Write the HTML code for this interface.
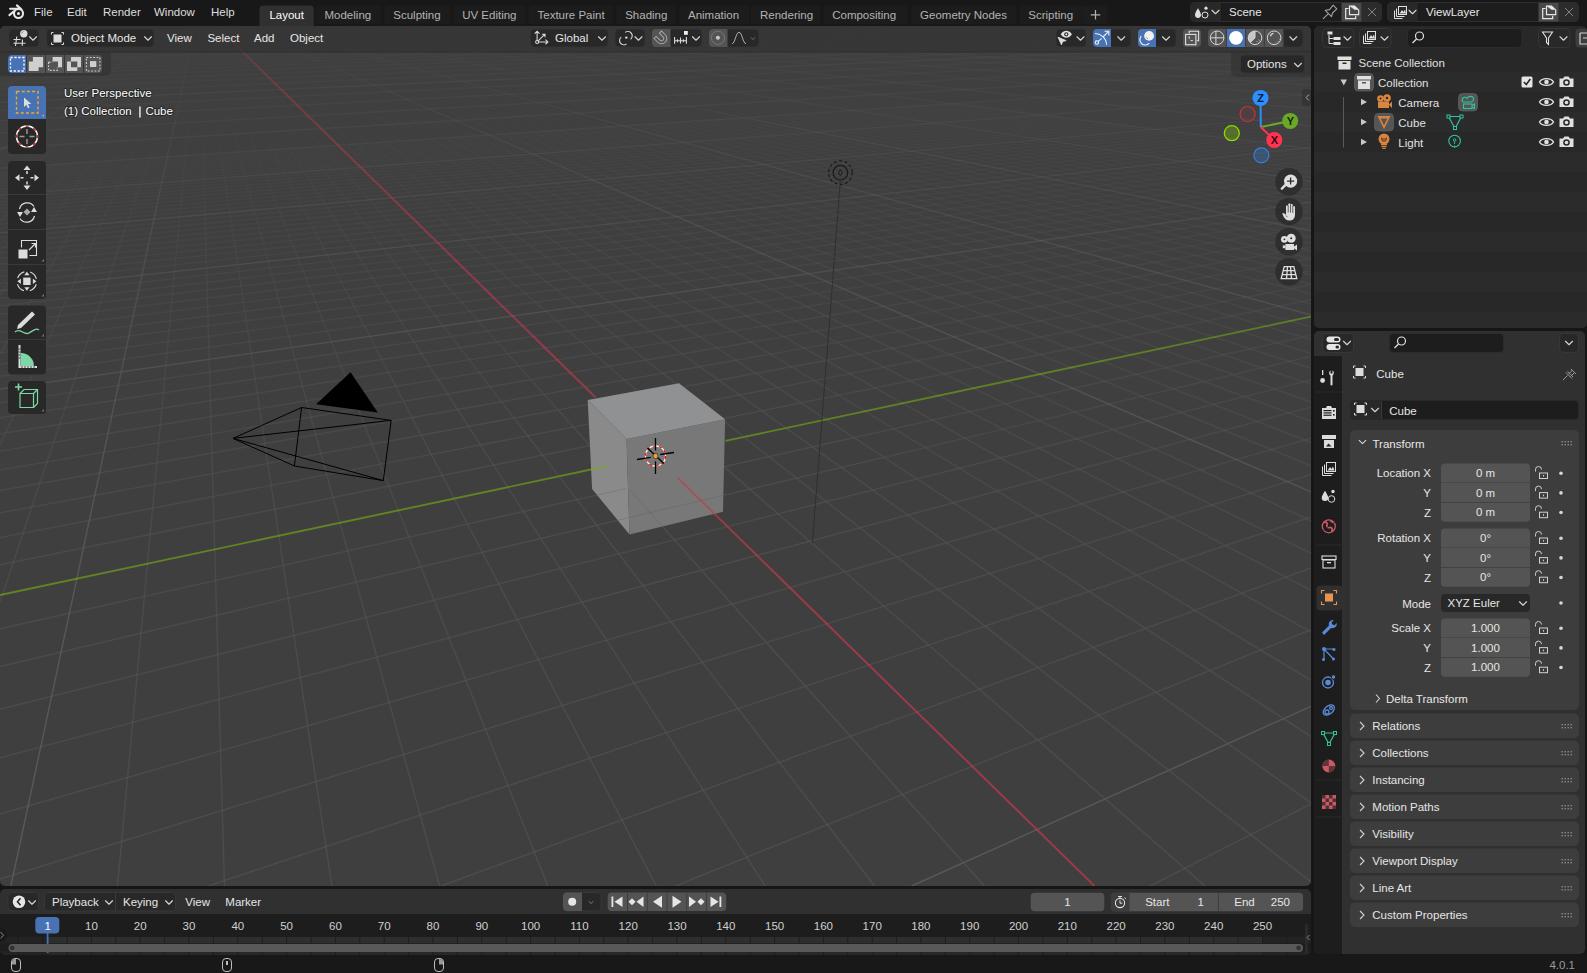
<!DOCTYPE html>
<html><head><meta charset="utf-8"><title>Blender</title>
<style>html,body{margin:0;padding:0;background:#161616;overflow:hidden}svg{display:block}text{font-family:"Liberation Sans",sans-serif}</style>
</head><body><svg width="1587" height="973" viewBox="0 0 1587 973" font-family='"Liberation Sans", sans-serif'><defs><style>stop{stop-color:#545454}</style><clipPath id="vpclip"><rect x="0" y="26" width="1311" height="860" rx="5"/></clipPath><linearGradient id="g1" gradientUnits="userSpaceOnUse" x1="0.0" y1="26.8" x2="41.1" y2="26.0"><stop offset="0.00" style="stop-color:#595959" stop-opacity="0.02"/><stop offset="1.00" style="stop-color:#595959" stop-opacity="0.02"/></linearGradient><linearGradient id="g2" gradientUnits="userSpaceOnUse" x1="0.0" y1="29.2" x2="155.9" y2="26.0"><stop offset="0.00" style="stop-color:#5c5c5c" stop-opacity="0.03"/><stop offset="1.00" style="stop-color:#5c5c5c" stop-opacity="0.03"/></linearGradient><linearGradient id="g3" gradientUnits="userSpaceOnUse" x1="0.0" y1="32.6" x2="300.8" y2="26.0"><stop offset="0.00" style="stop-color:#5e5e5e" stop-opacity="0.04"/><stop offset="1.00" style="stop-color:#5e5e5e" stop-opacity="0.04"/></linearGradient><linearGradient id="g4" gradientUnits="userSpaceOnUse" x1="0.0" y1="33.0" x2="317.4" y2="26.0"><stop offset="0.00" stop-opacity="0.01"/><stop offset="1.00" stop-opacity="0.01"/></linearGradient><linearGradient id="g5" gradientUnits="userSpaceOnUse" x1="0.0" y1="33.4" x2="334.5" y2="26.0"><stop offset="0.00" stop-opacity="0.01"/><stop offset="1.00" stop-opacity="0.01"/></linearGradient><linearGradient id="g6" gradientUnits="userSpaceOnUse" x1="0.0" y1="33.8" x2="352.0" y2="26.0"><stop offset="0.00" stop-opacity="0.01"/><stop offset="1.00" stop-opacity="0.01"/></linearGradient><linearGradient id="g7" gradientUnits="userSpaceOnUse" x1="0.0" y1="34.3" x2="370.0" y2="26.0"><stop offset="0.00" stop-opacity="0.01"/><stop offset="1.00" stop-opacity="0.01"/></linearGradient><linearGradient id="g8" gradientUnits="userSpaceOnUse" x1="0.0" y1="34.8" x2="388.5" y2="26.0"><stop offset="0.00" stop-opacity="0.01"/><stop offset="1.00" stop-opacity="0.01"/></linearGradient><linearGradient id="g9" gradientUnits="userSpaceOnUse" x1="0.0" y1="35.2" x2="407.6" y2="26.0"><stop offset="0.00" stop-opacity="0.01"/><stop offset="1.00" stop-opacity="0.01"/></linearGradient><linearGradient id="g10" gradientUnits="userSpaceOnUse" x1="0.0" y1="35.8" x2="427.2" y2="26.0"><stop offset="0.00" stop-opacity="0.01"/><stop offset="1.00" stop-opacity="0.01"/></linearGradient><linearGradient id="g11" gradientUnits="userSpaceOnUse" x1="0.0" y1="36.3" x2="447.3" y2="26.0"><stop offset="0.00" stop-opacity="0.01"/><stop offset="1.00" stop-opacity="0.01"/></linearGradient><linearGradient id="g12" gradientUnits="userSpaceOnUse" x1="0.0" y1="36.9" x2="468.1" y2="26.0"><stop offset="0.00" stop-opacity="0.01"/><stop offset="1.00" stop-opacity="0.01"/></linearGradient><linearGradient id="g13" gradientUnits="userSpaceOnUse" x1="0.0" y1="37.5" x2="489.5" y2="26.0"><stop offset="0.00" style="stop-color:#616161" stop-opacity="0.05"/><stop offset="1.00" style="stop-color:#616161" stop-opacity="0.05"/></linearGradient><linearGradient id="g14" gradientUnits="userSpaceOnUse" x1="0.0" y1="38.1" x2="511.5" y2="26.0"><stop offset="0.00" stop-opacity="0.02"/><stop offset="1.00" stop-opacity="0.01"/></linearGradient><linearGradient id="g15" gradientUnits="userSpaceOnUse" x1="0.0" y1="38.8" x2="534.2" y2="26.0"><stop offset="0.00" stop-opacity="0.02"/><stop offset="1.00" stop-opacity="0.02"/></linearGradient><linearGradient id="g16" gradientUnits="userSpaceOnUse" x1="0.0" y1="39.4" x2="557.7" y2="26.0"><stop offset="0.00" stop-opacity="0.02"/><stop offset="1.00" stop-opacity="0.02"/></linearGradient><linearGradient id="g17" gradientUnits="userSpaceOnUse" x1="0.0" y1="40.2" x2="581.9" y2="26.0"><stop offset="0.00" stop-opacity="0.02"/><stop offset="1.00" stop-opacity="0.02"/></linearGradient><linearGradient id="g18" gradientUnits="userSpaceOnUse" x1="0.0" y1="40.9" x2="606.8" y2="26.0"><stop offset="0.00" stop-opacity="0.02"/><stop offset="1.00" stop-opacity="0.02"/></linearGradient><linearGradient id="g19" gradientUnits="userSpaceOnUse" x1="0.0" y1="41.7" x2="632.7" y2="26.0"><stop offset="0.00" stop-opacity="0.03"/><stop offset="1.00" stop-opacity="0.02"/></linearGradient><linearGradient id="g20" gradientUnits="userSpaceOnUse" x1="0.0" y1="42.6" x2="659.3" y2="26.0"><stop offset="0.00" stop-opacity="0.03"/><stop offset="1.00" stop-opacity="0.02"/></linearGradient><linearGradient id="g21" gradientUnits="userSpaceOnUse" x1="0.0" y1="43.5" x2="687.0" y2="26.0"><stop offset="0.00" stop-opacity="0.03"/><stop offset="1.00" stop-opacity="0.02"/></linearGradient><linearGradient id="g22" gradientUnits="userSpaceOnUse" x1="0.0" y1="44.5" x2="715.5" y2="26.0"><stop offset="0.00" stop-opacity="0.04"/><stop offset="1.00" stop-opacity="0.03"/></linearGradient><linearGradient id="g23" gradientUnits="userSpaceOnUse" x1="0.0" y1="45.5" x2="745.1" y2="26.0"><stop offset="0.00" style="stop-color:#646464" stop-opacity="0.07"/><stop offset="1.00" style="stop-color:#646464" stop-opacity="0.06"/></linearGradient><linearGradient id="g24" gradientUnits="userSpaceOnUse" x1="0.0" y1="46.6" x2="775.7" y2="26.0"><stop offset="0.00" stop-opacity="0.05"/><stop offset="1.00" stop-opacity="0.03"/></linearGradient><linearGradient id="g25" gradientUnits="userSpaceOnUse" x1="0.0" y1="47.7" x2="807.5" y2="26.0"><stop offset="0.00" stop-opacity="0.05"/><stop offset="1.00" stop-opacity="0.03"/></linearGradient><linearGradient id="g26" gradientUnits="userSpaceOnUse" x1="0.0" y1="49.0" x2="840.5" y2="26.0"><stop offset="0.00" stop-opacity="0.06"/><stop offset="1.00" stop-opacity="0.04"/></linearGradient><linearGradient id="g27" gradientUnits="userSpaceOnUse" x1="0.0" y1="50.3" x2="874.7" y2="26.0"><stop offset="0.00" stop-opacity="0.07"/><stop offset="1.00" stop-opacity="0.04"/></linearGradient><linearGradient id="g28" gradientUnits="userSpaceOnUse" x1="0.0" y1="51.7" x2="910.3" y2="26.0"><stop offset="0.00" stop-opacity="0.08"/><stop offset="1.00" stop-opacity="0.04"/></linearGradient><linearGradient id="g29" gradientUnits="userSpaceOnUse" x1="0.0" y1="53.3" x2="947.3" y2="26.0"><stop offset="0.00" stop-opacity="0.08"/><stop offset="1.00" stop-opacity="0.05"/></linearGradient><linearGradient id="g30" gradientUnits="userSpaceOnUse" x1="0.0" y1="54.9" x2="985.8" y2="26.0"><stop offset="0.00" stop-opacity="0.09"/><stop offset="0.43" stop-opacity="0.08"/><stop offset="1.00" stop-opacity="0.05"/></linearGradient><linearGradient id="g31" gradientUnits="userSpaceOnUse" x1="0.0" y1="56.8" x2="1025.8" y2="26.0"><stop offset="0.00" stop-opacity="0.09"/><stop offset="0.57" stop-opacity="0.08"/><stop offset="1.00" stop-opacity="0.05"/></linearGradient><linearGradient id="g32" gradientUnits="userSpaceOnUse" x1="0.0" y1="58.7" x2="1067.6" y2="26.0"><stop offset="0.00" stop-opacity="0.09"/><stop offset="0.57" stop-opacity="0.09"/><stop offset="1.00" stop-opacity="0.06"/></linearGradient><linearGradient id="g33" gradientUnits="userSpaceOnUse" x1="0.0" y1="60.9" x2="1111.2" y2="26.0"><stop offset="0.00" style="stop-color:#666666" stop-opacity="0.10"/><stop offset="1.00" style="stop-color:#666666" stop-opacity="0.07"/></linearGradient><linearGradient id="g34" gradientUnits="userSpaceOnUse" x1="0.0" y1="63.2" x2="1156.7" y2="26.0"><stop offset="0.00" stop-opacity="0.10"/><stop offset="0.50" stop-opacity="0.10"/><stop offset="1.00" stop-opacity="0.07"/></linearGradient><linearGradient id="g35" gradientUnits="userSpaceOnUse" x1="0.0" y1="65.8" x2="1204.3" y2="26.0"><stop offset="0.00" stop-opacity="0.11"/><stop offset="0.50" stop-opacity="0.10"/><stop offset="1.00" stop-opacity="0.07"/></linearGradient><linearGradient id="g36" gradientUnits="userSpaceOnUse" x1="0.0" y1="68.6" x2="1254.0" y2="26.0"><stop offset="0.00" stop-opacity="0.11"/><stop offset="0.43" stop-opacity="0.11"/><stop offset="1.00" stop-opacity="0.07"/></linearGradient><linearGradient id="g37" gradientUnits="userSpaceOnUse" x1="0.0" y1="71.8" x2="1306.1" y2="26.0"><stop offset="0.00" style="stop-color:#555555" stop-opacity="0.12"/><stop offset="0.43" stop-opacity="0.11"/><stop offset="1.00" stop-opacity="0.07"/></linearGradient><linearGradient id="g38" gradientUnits="userSpaceOnUse" x1="0.0" y1="75.4" x2="1311.0" y2="27.8"><stop offset="0.00" style="stop-color:#555555" stop-opacity="0.12"/><stop offset="0.43" stop-opacity="0.12"/><stop offset="1.00" stop-opacity="0.07"/></linearGradient><linearGradient id="g39" gradientUnits="userSpaceOnUse" x1="0.0" y1="79.4" x2="1311.0" y2="30.0"><stop offset="0.00" style="stop-color:#555555" stop-opacity="0.13"/><stop offset="0.43" style="stop-color:#555555" stop-opacity="0.13"/><stop offset="1.00" stop-opacity="0.08"/></linearGradient><linearGradient id="g40" gradientUnits="userSpaceOnUse" x1="0.0" y1="83.9" x2="1311.0" y2="32.6"><stop offset="0.00" style="stop-color:#555555" stop-opacity="0.14"/><stop offset="0.43" style="stop-color:#555555" stop-opacity="0.14"/><stop offset="1.00" style="stop-color:#555555" stop-opacity="0.08"/></linearGradient><linearGradient id="g41" gradientUnits="userSpaceOnUse" x1="0.0" y1="89.1" x2="1311.0" y2="35.5"><stop offset="0.00" style="stop-color:#565656" stop-opacity="0.15"/><stop offset="0.43" style="stop-color:#555555" stop-opacity="0.14"/><stop offset="1.00" style="stop-color:#555555" stop-opacity="0.09"/></linearGradient><linearGradient id="g42" gradientUnits="userSpaceOnUse" x1="0.0" y1="95.2" x2="1311.0" y2="38.8"><stop offset="0.00" style="stop-color:#575757" stop-opacity="0.16"/><stop offset="0.43" style="stop-color:#565656" stop-opacity="0.16"/><stop offset="1.00" style="stop-color:#555555" stop-opacity="0.09"/></linearGradient><linearGradient id="g43" gradientUnits="userSpaceOnUse" x1="0.0" y1="102.2" x2="1311.0" y2="42.7"><stop offset="0.00" style="stop-color:#666666" stop-opacity="0.17"/><stop offset="0.43" style="stop-color:#666666" stop-opacity="0.17"/><stop offset="1.00" style="stop-color:#666666" stop-opacity="0.10"/></linearGradient><linearGradient id="g44" gradientUnits="userSpaceOnUse" x1="0.0" y1="110.5" x2="1311.0" y2="47.3"><stop offset="0.00" style="stop-color:#585858" stop-opacity="0.19"/><stop offset="0.43" style="stop-color:#575757" stop-opacity="0.18"/><stop offset="1.00" style="stop-color:#565656" stop-opacity="0.11"/></linearGradient><linearGradient id="g45" gradientUnits="userSpaceOnUse" x1="0.0" y1="120.6" x2="1311.0" y2="52.9"><stop offset="0.00" style="stop-color:#595959" stop-opacity="0.21"/><stop offset="0.43" style="stop-color:#585858" stop-opacity="0.20"/><stop offset="1.00" style="stop-color:#565656" stop-opacity="0.12"/></linearGradient><linearGradient id="g46" gradientUnits="userSpaceOnUse" x1="0.0" y1="132.9" x2="1311.0" y2="59.7"><stop offset="0.00" style="stop-color:#5a5a5a" stop-opacity="0.23"/><stop offset="0.43" style="stop-color:#585858" stop-opacity="0.22"/><stop offset="1.00" style="stop-color:#575757" stop-opacity="0.13"/></linearGradient><linearGradient id="g47" gradientUnits="userSpaceOnUse" x1="0.0" y1="148.3" x2="1311.0" y2="68.3"><stop offset="0.00" style="stop-color:#5b5b5b" stop-opacity="0.25"/><stop offset="0.43" style="stop-color:#595959" stop-opacity="0.24"/><stop offset="1.00" style="stop-color:#585858" stop-opacity="0.15"/></linearGradient><linearGradient id="g48" gradientUnits="userSpaceOnUse" x1="0.0" y1="168.2" x2="1311.0" y2="79.4"><stop offset="0.00" style="stop-color:#5c5c5c" stop-opacity="0.28"/><stop offset="0.43" style="stop-color:#5b5b5b" stop-opacity="0.27"/><stop offset="1.00" style="stop-color:#595959" stop-opacity="0.17"/></linearGradient><linearGradient id="g49" gradientUnits="userSpaceOnUse" x1="0.0" y1="170.6" x2="1311.0" y2="80.7"><stop offset="0.00" stop-opacity="0.13"/><stop offset="0.43" stop-opacity="0.10"/><stop offset="1.00" stop-opacity="0.04"/></linearGradient><linearGradient id="g50" gradientUnits="userSpaceOnUse" x1="0.0" y1="173.0" x2="1311.0" y2="82.0"><stop offset="0.00" stop-opacity="0.13"/><stop offset="0.43" stop-opacity="0.11"/><stop offset="1.00" stop-opacity="0.04"/></linearGradient><linearGradient id="g51" gradientUnits="userSpaceOnUse" x1="0.0" y1="175.4" x2="1311.0" y2="83.4"><stop offset="0.00" stop-opacity="0.13"/><stop offset="0.43" stop-opacity="0.11"/><stop offset="1.00" stop-opacity="0.04"/></linearGradient><linearGradient id="g52" gradientUnits="userSpaceOnUse" x1="0.0" y1="178.0" x2="1311.0" y2="84.8"><stop offset="0.00" stop-opacity="0.14"/><stop offset="0.43" stop-opacity="0.11"/><stop offset="1.00" stop-opacity="0.04"/></linearGradient><linearGradient id="g53" gradientUnits="userSpaceOnUse" x1="0.0" y1="180.6" x2="1311.0" y2="86.3"><stop offset="0.00" stop-opacity="0.14"/><stop offset="0.43" stop-opacity="0.12"/><stop offset="1.00" stop-opacity="0.05"/></linearGradient><linearGradient id="g54" gradientUnits="userSpaceOnUse" x1="0.0" y1="183.3" x2="1311.0" y2="87.8"><stop offset="0.00" stop-opacity="0.14"/><stop offset="0.43" stop-opacity="0.12"/><stop offset="1.00" stop-opacity="0.05"/></linearGradient><linearGradient id="g55" gradientUnits="userSpaceOnUse" x1="0.0" y1="186.1" x2="1311.0" y2="89.3"><stop offset="0.00" stop-opacity="0.15"/><stop offset="0.43" stop-opacity="0.12"/><stop offset="1.00" stop-opacity="0.05"/></linearGradient><linearGradient id="g56" gradientUnits="userSpaceOnUse" x1="0.0" y1="189.0" x2="1311.0" y2="90.9"><stop offset="0.00" stop-opacity="0.15"/><stop offset="0.43" stop-opacity="0.13"/><stop offset="1.00" stop-opacity="0.06"/></linearGradient><linearGradient id="g57" gradientUnits="userSpaceOnUse" x1="0.0" y1="192.0" x2="1311.0" y2="92.6"><stop offset="0.00" stop-opacity="0.16"/><stop offset="0.43" stop-opacity="0.13"/><stop offset="1.00" stop-opacity="0.06"/></linearGradient><linearGradient id="g58" gradientUnits="userSpaceOnUse" x1="0.0" y1="195.0" x2="1311.0" y2="94.3"><stop offset="0.00" style="stop-color:#5d5d5d" stop-opacity="0.32"/><stop offset="0.43" style="stop-color:#5c5c5c" stop-opacity="0.31"/><stop offset="1.00" style="stop-color:#5a5a5a" stop-opacity="0.19"/></linearGradient><linearGradient id="g59" gradientUnits="userSpaceOnUse" x1="0.0" y1="198.2" x2="1311.0" y2="96.1"><stop offset="0.00" stop-opacity="0.17"/><stop offset="0.43" stop-opacity="0.14"/><stop offset="1.00" stop-opacity="0.06"/></linearGradient><linearGradient id="g60" gradientUnits="userSpaceOnUse" x1="0.0" y1="201.6" x2="1311.0" y2="97.9"><stop offset="0.00" stop-opacity="0.17"/><stop offset="0.43" stop-opacity="0.14"/><stop offset="1.00" stop-opacity="0.07"/></linearGradient><linearGradient id="g61" gradientUnits="userSpaceOnUse" x1="0.0" y1="205.0" x2="1311.0" y2="99.8"><stop offset="0.00" stop-opacity="0.18"/><stop offset="0.43" stop-opacity="0.15"/><stop offset="1.00" stop-opacity="0.07"/></linearGradient><linearGradient id="g62" gradientUnits="userSpaceOnUse" x1="0.0" y1="208.5" x2="1311.0" y2="101.8"><stop offset="0.00" stop-opacity="0.18"/><stop offset="0.43" stop-opacity="0.15"/><stop offset="1.00" stop-opacity="0.07"/></linearGradient><linearGradient id="g63" gradientUnits="userSpaceOnUse" x1="0.0" y1="212.2" x2="1311.0" y2="103.8"><stop offset="0.00" stop-opacity="0.19"/><stop offset="0.43" stop-opacity="0.16"/><stop offset="1.00" stop-opacity="0.07"/></linearGradient><linearGradient id="g64" gradientUnits="userSpaceOnUse" x1="0.0" y1="216.1" x2="1311.0" y2="106.0"><stop offset="0.00" stop-opacity="0.19"/><stop offset="0.43" stop-opacity="0.16"/><stop offset="1.00" stop-opacity="0.08"/></linearGradient><linearGradient id="g65" gradientUnits="userSpaceOnUse" x1="0.0" y1="220.0" x2="1311.0" y2="108.2"><stop offset="0.00" stop-opacity="0.20"/><stop offset="0.43" stop-opacity="0.17"/><stop offset="1.00" stop-opacity="0.08"/></linearGradient><linearGradient id="g66" gradientUnits="userSpaceOnUse" x1="0.0" y1="224.2" x2="1311.0" y2="110.5"><stop offset="0.00" stop-opacity="0.20"/><stop offset="0.43" stop-opacity="0.17"/><stop offset="1.00" stop-opacity="0.08"/></linearGradient><linearGradient id="g67" gradientUnits="userSpaceOnUse" x1="0.0" y1="228.5" x2="1311.0" y2="112.9"><stop offset="0.00" stop-opacity="0.21"/><stop offset="0.43" stop-opacity="0.18"/><stop offset="1.00" stop-opacity="0.09"/></linearGradient><linearGradient id="g68" gradientUnits="userSpaceOnUse" x1="0.0" y1="232.9" x2="1311.0" y2="115.4"><stop offset="0.00" style="stop-color:#5e5e5e" stop-opacity="0.37"/><stop offset="0.29" style="stop-color:#5e5e5e" stop-opacity="0.38"/><stop offset="0.50" style="stop-color:#5d5d5d" stop-opacity="0.35"/><stop offset="1.00" style="stop-color:#5b5b5b" stop-opacity="0.23"/></linearGradient><linearGradient id="g69" gradientUnits="userSpaceOnUse" x1="0.0" y1="237.6" x2="1311.0" y2="118.0"><stop offset="0.00" stop-opacity="0.22"/><stop offset="0.43" stop-opacity="0.19"/><stop offset="1.00" stop-opacity="0.09"/></linearGradient><linearGradient id="g70" gradientUnits="userSpaceOnUse" x1="0.0" y1="242.5" x2="1311.0" y2="120.7"><stop offset="0.00" stop-opacity="0.23"/><stop offset="0.43" stop-opacity="0.20"/><stop offset="1.00" stop-opacity="0.10"/></linearGradient><linearGradient id="g71" gradientUnits="userSpaceOnUse" x1="0.0" y1="247.6" x2="1311.0" y2="123.5"><stop offset="0.00" stop-opacity="0.23"/><stop offset="0.43" stop-opacity="0.20"/><stop offset="1.00" stop-opacity="0.10"/></linearGradient><linearGradient id="g72" gradientUnits="userSpaceOnUse" x1="0.0" y1="252.9" x2="1311.0" y2="126.5"><stop offset="0.00" stop-opacity="0.24"/><stop offset="0.43" stop-opacity="0.21"/><stop offset="1.00" stop-opacity="0.10"/></linearGradient><linearGradient id="g73" gradientUnits="userSpaceOnUse" x1="0.0" y1="258.5" x2="1311.0" y2="129.5"><stop offset="0.00" stop-opacity="0.25"/><stop offset="0.43" stop-opacity="0.22"/><stop offset="1.00" stop-opacity="0.11"/></linearGradient><linearGradient id="g74" gradientUnits="userSpaceOnUse" x1="0.0" y1="264.3" x2="1311.0" y2="132.8"><stop offset="0.00" stop-opacity="0.25"/><stop offset="0.43" stop-opacity="0.23"/><stop offset="1.00" stop-opacity="0.11"/></linearGradient><linearGradient id="g75" gradientUnits="userSpaceOnUse" x1="0.0" y1="270.4" x2="1311.0" y2="136.2"><stop offset="0.00" stop-opacity="0.26"/><stop offset="0.43" stop-opacity="0.23"/><stop offset="1.00" stop-opacity="0.12"/></linearGradient><linearGradient id="g76" gradientUnits="userSpaceOnUse" x1="0.0" y1="276.8" x2="1311.0" y2="139.7"><stop offset="0.00" stop-opacity="0.27"/><stop offset="0.43" stop-opacity="0.24"/><stop offset="1.00" stop-opacity="0.12"/></linearGradient><linearGradient id="g77" gradientUnits="userSpaceOnUse" x1="0.0" y1="283.5" x2="1311.0" y2="143.5"><stop offset="0.00" stop-opacity="0.28"/><stop offset="0.43" stop-opacity="0.25"/><stop offset="1.00" stop-opacity="0.13"/></linearGradient><linearGradient id="g78" gradientUnits="userSpaceOnUse" x1="0.0" y1="290.6" x2="1311.0" y2="147.4"><stop offset="0.00" style="stop-color:#606060" stop-opacity="0.44"/><stop offset="0.29" style="stop-color:#5f5f5f" stop-opacity="0.45"/><stop offset="0.50" style="stop-color:#5e5e5e" stop-opacity="0.42"/><stop offset="1.00" style="stop-color:#5d5d5d" stop-opacity="0.28"/></linearGradient><linearGradient id="g79" gradientUnits="userSpaceOnUse" x1="0.0" y1="298.1" x2="1311.0" y2="151.6"><stop offset="0.00" stop-opacity="0.30"/><stop offset="0.43" stop-opacity="0.27"/><stop offset="1.00" stop-opacity="0.14"/></linearGradient><linearGradient id="g80" gradientUnits="userSpaceOnUse" x1="0.0" y1="306.0" x2="1311.0" y2="155.9"><stop offset="0.00" stop-opacity="0.31"/><stop offset="0.43" stop-opacity="0.27"/><stop offset="1.00" stop-opacity="0.15"/></linearGradient><linearGradient id="g81" gradientUnits="userSpaceOnUse" x1="0.0" y1="314.3" x2="1311.0" y2="160.6"><stop offset="0.00" stop-opacity="0.32"/><stop offset="0.43" stop-opacity="0.28"/><stop offset="1.00" stop-opacity="0.15"/></linearGradient><linearGradient id="g82" gradientUnits="userSpaceOnUse" x1="0.0" y1="323.1" x2="1311.0" y2="165.5"><stop offset="0.00" stop-opacity="0.32"/><stop offset="0.43" stop-opacity="0.29"/><stop offset="1.00" stop-opacity="0.16"/></linearGradient><linearGradient id="g83" gradientUnits="userSpaceOnUse" x1="0.0" y1="332.5" x2="1311.0" y2="170.7"><stop offset="0.00" stop-opacity="0.34"/><stop offset="0.43" stop-opacity="0.30"/><stop offset="1.00" stop-opacity="0.17"/></linearGradient><linearGradient id="g84" gradientUnits="userSpaceOnUse" x1="0.0" y1="342.4" x2="1311.0" y2="176.2"><stop offset="0.00" stop-opacity="0.35"/><stop offset="0.50" stop-opacity="0.30"/><stop offset="1.00" stop-opacity="0.17"/></linearGradient><linearGradient id="g85" gradientUnits="userSpaceOnUse" x1="0.0" y1="352.9" x2="1311.0" y2="182.0"><stop offset="0.00" stop-opacity="0.36"/><stop offset="0.50" stop-opacity="0.31"/><stop offset="1.00" stop-opacity="0.18"/></linearGradient><linearGradient id="g86" gradientUnits="userSpaceOnUse" x1="0.0" y1="364.2" x2="1311.0" y2="188.3"><stop offset="0.00" stop-opacity="0.37"/><stop offset="0.50" stop-opacity="0.33"/><stop offset="1.00" stop-opacity="0.19"/></linearGradient><linearGradient id="g87" gradientUnits="userSpaceOnUse" x1="0.0" y1="376.2" x2="1311.0" y2="195.0"><stop offset="0.00" stop-opacity="0.38"/><stop offset="0.29" stop-opacity="0.37"/><stop offset="0.50" stop-opacity="0.34"/><stop offset="1.00" stop-opacity="0.20"/></linearGradient><linearGradient id="g88" gradientUnits="userSpaceOnUse" x1="0.0" y1="389.1" x2="1311.0" y2="202.1"><stop offset="0.00" style="stop-color:#616161" stop-opacity="0.53"/><stop offset="0.29" style="stop-color:#616161" stop-opacity="0.54"/><stop offset="0.50" style="stop-color:#606060" stop-opacity="0.52"/><stop offset="0.71" style="stop-color:#606060" stop-opacity="0.46"/><stop offset="1.00" style="stop-color:#5f5f5f" stop-opacity="0.36"/></linearGradient><linearGradient id="g89" gradientUnits="userSpaceOnUse" x1="0.0" y1="402.9" x2="1311.0" y2="209.8"><stop offset="0.00" stop-opacity="0.40"/><stop offset="0.29" stop-opacity="0.39"/><stop offset="0.50" stop-opacity="0.36"/><stop offset="1.00" stop-opacity="0.22"/></linearGradient><linearGradient id="g90" gradientUnits="userSpaceOnUse" x1="0.0" y1="417.7" x2="1311.0" y2="218.0"><stop offset="0.00" stop-opacity="0.42"/><stop offset="0.29" stop-opacity="0.41"/><stop offset="0.50" stop-opacity="0.38"/><stop offset="1.00" stop-opacity="0.23"/></linearGradient><linearGradient id="g91" gradientUnits="userSpaceOnUse" x1="0.0" y1="433.8" x2="1311.0" y2="227.0"><stop offset="0.00" stop-opacity="0.43"/><stop offset="0.29" stop-opacity="0.42"/><stop offset="0.50" stop-opacity="0.39"/><stop offset="1.00" stop-opacity="0.24"/></linearGradient><linearGradient id="g92" gradientUnits="userSpaceOnUse" x1="0.0" y1="451.1" x2="1311.0" y2="236.6"><stop offset="0.00" stop-opacity="0.44"/><stop offset="0.29" stop-opacity="0.43"/><stop offset="0.50" stop-opacity="0.40"/><stop offset="1.00" stop-opacity="0.25"/></linearGradient><linearGradient id="g93" gradientUnits="userSpaceOnUse" x1="0.0" y1="469.9" x2="1311.0" y2="247.1"><stop offset="0.00" stop-opacity="0.46"/><stop offset="0.50" stop-opacity="0.42"/><stop offset="1.00" stop-opacity="0.27"/></linearGradient><linearGradient id="g94" gradientUnits="userSpaceOnUse" x1="0.0" y1="490.5" x2="1311.0" y2="258.5"><stop offset="0.00" stop-opacity="0.47"/><stop offset="0.50" stop-opacity="0.43"/><stop offset="0.71" stop-opacity="0.38"/><stop offset="1.00" stop-opacity="0.28"/></linearGradient><linearGradient id="g95" gradientUnits="userSpaceOnUse" x1="0.0" y1="512.9" x2="1311.0" y2="270.9"><stop offset="0.00" stop-opacity="0.49"/><stop offset="0.50" stop-opacity="0.45"/><stop offset="0.71" stop-opacity="0.40"/><stop offset="1.00" stop-opacity="0.30"/></linearGradient><linearGradient id="g96" gradientUnits="userSpaceOnUse" x1="0.0" y1="537.6" x2="1311.0" y2="284.7"><stop offset="0.00" stop-opacity="0.50"/><stop offset="0.50" stop-opacity="0.46"/><stop offset="0.71" stop-opacity="0.41"/><stop offset="1.00" stop-opacity="0.31"/></linearGradient><linearGradient id="g97" gradientUnits="userSpaceOnUse" x1="0.0" y1="564.8" x2="1311.0" y2="299.8"><stop offset="0.00" stop-opacity="0.51"/><stop offset="0.50" stop-opacity="0.48"/><stop offset="0.71" stop-opacity="0.43"/><stop offset="1.00" stop-opacity="0.33"/></linearGradient><linearGradient id="g98" gradientUnits="userSpaceOnUse" x1="0.0" y1="628.7" x2="1311.0" y2="335.3"><stop offset="0.00" stop-opacity="0.54"/><stop offset="0.29" stop-opacity="0.53"/><stop offset="0.57" stop-opacity="0.50"/><stop offset="0.79" stop-opacity="0.44"/><stop offset="1.00" stop-opacity="0.37"/></linearGradient><linearGradient id="g99" gradientUnits="userSpaceOnUse" x1="0.0" y1="666.5" x2="1311.0" y2="356.3"><stop offset="0.00" stop-opacity="0.56"/><stop offset="0.57" stop-opacity="0.52"/><stop offset="0.79" stop-opacity="0.46"/><stop offset="1.00" stop-opacity="0.39"/></linearGradient><linearGradient id="g100" gradientUnits="userSpaceOnUse" x1="0.0" y1="709.2" x2="1311.0" y2="380.0"><stop offset="0.00" stop-opacity="0.57"/><stop offset="0.57" stop-opacity="0.53"/><stop offset="0.79" stop-opacity="0.48"/><stop offset="1.00" stop-opacity="0.41"/></linearGradient><linearGradient id="g101" gradientUnits="userSpaceOnUse" x1="0.0" y1="757.9" x2="1311.0" y2="407.1"><stop offset="0.00" stop-opacity="0.58"/><stop offset="0.57" stop-opacity="0.55"/><stop offset="0.79" stop-opacity="0.50"/><stop offset="1.00" stop-opacity="0.43"/></linearGradient><linearGradient id="g102" gradientUnits="userSpaceOnUse" x1="0.0" y1="814.0" x2="1311.0" y2="438.2"><stop offset="0.00" stop-opacity="0.60"/><stop offset="0.57" stop-opacity="0.56"/><stop offset="0.79" stop-opacity="0.52"/><stop offset="1.00" stop-opacity="0.45"/></linearGradient><linearGradient id="g103" gradientUnits="userSpaceOnUse" x1="0.0" y1="879.1" x2="1311.0" y2="474.4"><stop offset="0.00" stop-opacity="0.61"/><stop offset="0.64" stop-opacity="0.57"/><stop offset="1.00" stop-opacity="0.48"/></linearGradient><linearGradient id="g104" gradientUnits="userSpaceOnUse" x1="208.4" y1="886.0" x2="1311.0" y2="517.0"><stop offset="0.00" stop-opacity="0.61"/><stop offset="0.64" stop-opacity="0.58"/><stop offset="1.00" stop-opacity="0.50"/></linearGradient><linearGradient id="g105" gradientUnits="userSpaceOnUse" x1="441.0" y1="886.0" x2="1311.0" y2="567.9"><stop offset="0.00" stop-opacity="0.62"/><stop offset="0.57" stop-opacity="0.59"/><stop offset="1.00" stop-opacity="0.53"/></linearGradient><linearGradient id="g106" gradientUnits="userSpaceOnUse" x1="675.5" y1="886.0" x2="1311.0" y2="629.7"><stop offset="0.00" stop-opacity="0.62"/><stop offset="0.57" stop-opacity="0.59"/><stop offset="1.00" stop-opacity="0.55"/></linearGradient><linearGradient id="g107" gradientUnits="userSpaceOnUse" x1="911.7" y1="886.0" x2="1311.0" y2="706.3"><stop offset="0.00" style="stop-color:#646464" stop-opacity="0.70"/><stop offset="1.00" style="stop-color:#636363" stop-opacity="0.67"/></linearGradient><linearGradient id="g108" gradientUnits="userSpaceOnUse" x1="1149.9" y1="886.0" x2="1311.0" y2="803.9"><stop offset="0.00" stop-opacity="0.62"/><stop offset="1.00" stop-opacity="0.60"/></linearGradient><linearGradient id="g109" gradientUnits="userSpaceOnUse" x1="35.7" y1="26.0" x2="0.0" y2="29.7"><stop offset="0.00" style="stop-color:#595959" stop-opacity="0.02"/><stop offset="1.00" style="stop-color:#5c5c5c" stop-opacity="0.03"/></linearGradient><linearGradient id="g110" gradientUnits="userSpaceOnUse" x1="51.2" y1="26.0" x2="0.0" y2="31.9"><stop offset="0.00" stop-opacity="0.01"/><stop offset="1.00" stop-opacity="0.02"/></linearGradient><linearGradient id="g111" gradientUnits="userSpaceOnUse" x1="67.2" y1="26.0" x2="0.0" y2="34.7"><stop offset="0.00" stop-opacity="0.01"/><stop offset="1.00" stop-opacity="0.03"/></linearGradient><linearGradient id="g112" gradientUnits="userSpaceOnUse" x1="83.7" y1="26.0" x2="0.0" y2="38.3"><stop offset="0.00" stop-opacity="0.01"/><stop offset="1.00" stop-opacity="0.04"/></linearGradient><linearGradient id="g113" gradientUnits="userSpaceOnUse" x1="100.8" y1="26.0" x2="0.0" y2="43.4"><stop offset="0.00" stop-opacity="0.01"/><stop offset="1.00" stop-opacity="0.05"/></linearGradient><linearGradient id="g114" gradientUnits="userSpaceOnUse" x1="118.4" y1="26.0" x2="-0.0" y2="51.0"><stop offset="0.00" stop-opacity="0.01"/><stop offset="1.00" stop-opacity="0.07"/></linearGradient><linearGradient id="g115" gradientUnits="userSpaceOnUse" x1="136.7" y1="26.0" x2="0.0" y2="63.3"><stop offset="0.00" stop-opacity="0.01"/><stop offset="1.00" stop-opacity="0.10"/></linearGradient><linearGradient id="g116" gradientUnits="userSpaceOnUse" x1="153.6" y1="26.0" x2="0.0" y2="83.5"><stop offset="0.00" stop-opacity="0.00"/><stop offset="1.00" stop-opacity="0.01"/></linearGradient><linearGradient id="g117" gradientUnits="userSpaceOnUse" x1="155.6" y1="26.0" x2="0.0" y2="86.8"><stop offset="0.00" stop-opacity="0.01"/><stop offset="0.43" stop-opacity="0.09"/><stop offset="1.00" style="stop-color:#565656" stop-opacity="0.15"/></linearGradient><linearGradient id="g118" gradientUnits="userSpaceOnUse" x1="157.5" y1="26.0" x2="-0.0" y2="90.4"><stop offset="0.00" stop-opacity="0.00"/><stop offset="1.00" stop-opacity="0.02"/></linearGradient><linearGradient id="g119" gradientUnits="userSpaceOnUse" x1="159.4" y1="26.0" x2="0.0" y2="94.4"><stop offset="0.00" stop-opacity="0.00"/><stop offset="1.00" stop-opacity="0.02"/></linearGradient><linearGradient id="g120" gradientUnits="userSpaceOnUse" x1="161.3" y1="26.0" x2="-0.0" y2="98.8"><stop offset="0.00" stop-opacity="0.00"/><stop offset="0.57" stop-opacity="0.00"/><stop offset="1.00" stop-opacity="0.03"/></linearGradient><linearGradient id="g121" gradientUnits="userSpaceOnUse" x1="163.3" y1="26.0" x2="0.0" y2="103.7"><stop offset="0.00" stop-opacity="0.00"/><stop offset="0.57" stop-opacity="0.00"/><stop offset="1.00" stop-opacity="0.03"/></linearGradient><linearGradient id="g122" gradientUnits="userSpaceOnUse" x1="165.2" y1="26.0" x2="0.0" y2="109.2"><stop offset="0.00" stop-opacity="0.00"/><stop offset="0.50" stop-opacity="0.00"/><stop offset="1.00" stop-opacity="0.04"/></linearGradient><linearGradient id="g123" gradientUnits="userSpaceOnUse" x1="167.2" y1="26.0" x2="0.0" y2="115.3"><stop offset="0.00" stop-opacity="0.00"/><stop offset="0.50" stop-opacity="0.00"/><stop offset="1.00" stop-opacity="0.05"/></linearGradient><linearGradient id="g124" gradientUnits="userSpaceOnUse" x1="169.2" y1="26.0" x2="0.0" y2="122.3"><stop offset="0.00" stop-opacity="0.00"/><stop offset="0.50" stop-opacity="0.01"/><stop offset="1.00" stop-opacity="0.06"/></linearGradient><linearGradient id="g125" gradientUnits="userSpaceOnUse" x1="171.1" y1="26.0" x2="0.0" y2="130.4"><stop offset="0.00" stop-opacity="0.00"/><stop offset="0.50" stop-opacity="0.01"/><stop offset="1.00" stop-opacity="0.07"/></linearGradient><linearGradient id="g126" gradientUnits="userSpaceOnUse" x1="173.1" y1="26.0" x2="0.0" y2="139.6"><stop offset="0.00" stop-opacity="0.00"/><stop offset="0.43" stop-opacity="0.01"/><stop offset="1.00" stop-opacity="0.08"/></linearGradient><linearGradient id="g127" gradientUnits="userSpaceOnUse" x1="175.1" y1="26.0" x2="0.0" y2="150.5"><stop offset="0.00" stop-opacity="0.02"/><stop offset="0.29" stop-opacity="0.11"/><stop offset="1.00" style="stop-color:#5b5b5b" stop-opacity="0.25"/></linearGradient><linearGradient id="g128" gradientUnits="userSpaceOnUse" x1="177.1" y1="26.0" x2="0.0" y2="163.4"><stop offset="0.00" stop-opacity="0.00"/><stop offset="0.43" stop-opacity="0.02"/><stop offset="1.00" stop-opacity="0.12"/></linearGradient><linearGradient id="g129" gradientUnits="userSpaceOnUse" x1="179.1" y1="26.0" x2="0.0" y2="178.9"><stop offset="0.00" stop-opacity="0.00"/><stop offset="0.36" stop-opacity="0.01"/><stop offset="1.00" stop-opacity="0.14"/></linearGradient><linearGradient id="g130" gradientUnits="userSpaceOnUse" x1="181.1" y1="26.0" x2="0.0" y2="197.9"><stop offset="0.00" stop-opacity="0.00"/><stop offset="0.36" stop-opacity="0.02"/><stop offset="1.00" stop-opacity="0.17"/></linearGradient><linearGradient id="g131" gradientUnits="userSpaceOnUse" x1="183.1" y1="26.0" x2="0.0" y2="221.9"><stop offset="0.00" stop-opacity="0.00"/><stop offset="0.29" stop-opacity="0.01"/><stop offset="1.00" stop-opacity="0.20"/></linearGradient><linearGradient id="g132" gradientUnits="userSpaceOnUse" x1="185.1" y1="26.0" x2="0.0" y2="252.9"><stop offset="0.00" stop-opacity="0.00"/><stop offset="0.29" stop-opacity="0.02"/><stop offset="1.00" stop-opacity="0.24"/></linearGradient><linearGradient id="g133" gradientUnits="userSpaceOnUse" x1="187.2" y1="26.0" x2="0.0" y2="294.8"><stop offset="0.00" stop-opacity="0.00"/><stop offset="0.21" stop-opacity="0.02"/><stop offset="1.00" stop-opacity="0.29"/></linearGradient><linearGradient id="g134" gradientUnits="userSpaceOnUse" x1="189.2" y1="26.0" x2="0.0" y2="354.1"><stop offset="0.00" stop-opacity="0.00"/><stop offset="0.14" stop-opacity="0.01"/><stop offset="0.21" stop-opacity="0.03"/><stop offset="0.64" stop-opacity="0.23"/><stop offset="1.00" stop-opacity="0.36"/></linearGradient><linearGradient id="g135" gradientUnits="userSpaceOnUse" x1="191.2" y1="26.0" x2="0.0" y2="445.1"><stop offset="0.00" stop-opacity="0.00"/><stop offset="0.14" stop-opacity="0.02"/><stop offset="0.64" stop-opacity="0.30"/><stop offset="1.00" stop-opacity="0.44"/></linearGradient><linearGradient id="g136" gradientUnits="userSpaceOnUse" x1="193.3" y1="26.0" x2="-0.0" y2="601.9"><stop offset="0.00" stop-opacity="0.00"/><stop offset="0.07" stop-opacity="0.00"/><stop offset="0.14" stop-opacity="0.05"/><stop offset="0.36" stop-opacity="0.23"/><stop offset="0.57" stop-opacity="0.37"/><stop offset="0.79" stop-opacity="0.47"/><stop offset="1.00" stop-opacity="0.53"/></linearGradient><linearGradient id="g137" gradientUnits="userSpaceOnUse" x1="195.4" y1="26.0" x2="10.9" y2="886.0"><stop offset="0.00" stop-opacity="0.02"/><stop offset="0.07" style="stop-color:#565656" stop-opacity="0.16"/><stop offset="0.21" style="stop-color:#5e5e5e" stop-opacity="0.37"/><stop offset="0.29" style="stop-color:#5f5f5f" stop-opacity="0.44"/><stop offset="0.43" style="stop-color:#616161" stop-opacity="0.55"/><stop offset="0.64" style="stop-color:#636363" stop-opacity="0.64"/><stop offset="1.00" style="stop-color:#646464" stop-opacity="0.69"/></linearGradient><linearGradient id="g138" gradientUnits="userSpaceOnUse" x1="197.4" y1="26.0" x2="117.5" y2="886.0"><stop offset="0.00" stop-opacity="0.00"/><stop offset="0.07" stop-opacity="0.02"/><stop offset="0.29" stop-opacity="0.28"/><stop offset="0.50" stop-opacity="0.46"/><stop offset="0.71" stop-opacity="0.56"/><stop offset="1.00" stop-opacity="0.61"/></linearGradient><linearGradient id="g139" gradientUnits="userSpaceOnUse" x1="199.5" y1="26.0" x2="224.5" y2="886.0"><stop offset="0.00" stop-opacity="0.00"/><stop offset="0.07" stop-opacity="0.02"/><stop offset="0.29" stop-opacity="0.29"/><stop offset="0.36" stop-opacity="0.36"/><stop offset="0.50" stop-opacity="0.47"/><stop offset="0.71" stop-opacity="0.56"/><stop offset="1.00" stop-opacity="0.61"/></linearGradient><linearGradient id="g140" gradientUnits="userSpaceOnUse" x1="201.6" y1="26.0" x2="331.9" y2="886.0"><stop offset="0.00" stop-opacity="0.00"/><stop offset="0.07" stop-opacity="0.02"/><stop offset="0.29" stop-opacity="0.29"/><stop offset="0.36" stop-opacity="0.36"/><stop offset="0.50" stop-opacity="0.48"/><stop offset="0.71" stop-opacity="0.57"/><stop offset="1.00" stop-opacity="0.61"/></linearGradient><linearGradient id="g141" gradientUnits="userSpaceOnUse" x1="203.7" y1="26.0" x2="439.6" y2="886.0"><stop offset="0.00" stop-opacity="0.00"/><stop offset="0.07" stop-opacity="0.02"/><stop offset="0.29" stop-opacity="0.29"/><stop offset="0.36" stop-opacity="0.37"/><stop offset="0.50" stop-opacity="0.48"/><stop offset="0.71" stop-opacity="0.57"/><stop offset="1.00" stop-opacity="0.62"/></linearGradient><linearGradient id="g142" gradientUnits="userSpaceOnUse" x1="205.8" y1="26.0" x2="547.8" y2="886.0"><stop offset="0.00" stop-opacity="0.00"/><stop offset="0.07" stop-opacity="0.02"/><stop offset="0.29" stop-opacity="0.30"/><stop offset="0.36" stop-opacity="0.37"/><stop offset="0.50" stop-opacity="0.48"/><stop offset="0.71" stop-opacity="0.57"/><stop offset="1.00" stop-opacity="0.62"/></linearGradient><linearGradient id="g143" gradientUnits="userSpaceOnUse" x1="207.9" y1="26.0" x2="656.3" y2="886.0"><stop offset="0.00" stop-opacity="0.00"/><stop offset="0.07" stop-opacity="0.02"/><stop offset="0.29" stop-opacity="0.30"/><stop offset="0.36" stop-opacity="0.38"/><stop offset="0.50" stop-opacity="0.49"/><stop offset="0.71" stop-opacity="0.57"/><stop offset="1.00" stop-opacity="0.62"/></linearGradient><linearGradient id="g144" gradientUnits="userSpaceOnUse" x1="210.0" y1="26.0" x2="765.3" y2="886.0"><stop offset="0.00" stop-opacity="0.00"/><stop offset="0.07" stop-opacity="0.02"/><stop offset="0.29" stop-opacity="0.30"/><stop offset="0.36" stop-opacity="0.38"/><stop offset="0.50" stop-opacity="0.49"/><stop offset="0.71" stop-opacity="0.58"/><stop offset="1.00" stop-opacity="0.62"/></linearGradient><linearGradient id="g145" gradientUnits="userSpaceOnUse" x1="212.1" y1="26.0" x2="874.6" y2="886.0"><stop offset="0.00" stop-opacity="0.00"/><stop offset="0.07" stop-opacity="0.02"/><stop offset="0.29" stop-opacity="0.31"/><stop offset="0.36" stop-opacity="0.38"/><stop offset="0.50" stop-opacity="0.49"/><stop offset="0.71" stop-opacity="0.58"/><stop offset="1.00" stop-opacity="0.62"/></linearGradient><linearGradient id="g146" gradientUnits="userSpaceOnUse" x1="214.2" y1="26.0" x2="984.4" y2="886.0"><stop offset="0.00" stop-opacity="0.00"/><stop offset="0.07" stop-opacity="0.02"/><stop offset="0.29" stop-opacity="0.31"/><stop offset="0.36" stop-opacity="0.38"/><stop offset="0.50" stop-opacity="0.49"/><stop offset="0.71" stop-opacity="0.58"/><stop offset="1.00" stop-opacity="0.62"/></linearGradient><linearGradient id="g147" gradientUnits="userSpaceOnUse" x1="218.5" y1="26.0" x2="1205.1" y2="886.0"><stop offset="0.00" stop-opacity="0.00"/><stop offset="0.07" stop-opacity="0.02"/><stop offset="0.29" stop-opacity="0.31"/><stop offset="0.36" stop-opacity="0.39"/><stop offset="0.50" stop-opacity="0.50"/><stop offset="0.71" stop-opacity="0.57"/><stop offset="1.00" stop-opacity="0.61"/></linearGradient><linearGradient id="g148" gradientUnits="userSpaceOnUse" x1="220.6" y1="26.0" x2="1311.0" y2="882.0"><stop offset="0.00" stop-opacity="0.00"/><stop offset="0.07" stop-opacity="0.02"/><stop offset="0.29" stop-opacity="0.31"/><stop offset="0.36" stop-opacity="0.39"/><stop offset="0.50" stop-opacity="0.49"/><stop offset="0.71" stop-opacity="0.57"/><stop offset="1.00" stop-opacity="0.61"/></linearGradient><linearGradient id="g149" gradientUnits="userSpaceOnUse" x1="222.8" y1="26.0" x2="1311.0" y2="802.9"><stop offset="0.00" stop-opacity="0.00"/><stop offset="0.07" stop-opacity="0.02"/><stop offset="0.36" stop-opacity="0.36"/><stop offset="0.50" stop-opacity="0.47"/><stop offset="0.71" stop-opacity="0.55"/><stop offset="1.00" stop-opacity="0.60"/></linearGradient><linearGradient id="g150" gradientUnits="userSpaceOnUse" x1="225.0" y1="26.0" x2="1311.0" y2="736.7"><stop offset="0.00" stop-opacity="0.00"/><stop offset="0.07" stop-opacity="0.01"/><stop offset="0.36" stop-opacity="0.33"/><stop offset="0.50" stop-opacity="0.44"/><stop offset="0.71" stop-opacity="0.53"/><stop offset="1.00" stop-opacity="0.59"/></linearGradient><linearGradient id="g151" gradientUnits="userSpaceOnUse" x1="227.1" y1="26.0" x2="1311.0" y2="680.4"><stop offset="0.00" stop-opacity="0.00"/><stop offset="0.07" stop-opacity="0.01"/><stop offset="0.36" stop-opacity="0.30"/><stop offset="0.50" stop-opacity="0.41"/><stop offset="0.71" stop-opacity="0.51"/><stop offset="1.00" stop-opacity="0.57"/></linearGradient><linearGradient id="g152" gradientUnits="userSpaceOnUse" x1="229.3" y1="26.0" x2="1311.0" y2="632.1"><stop offset="0.00" stop-opacity="0.00"/><stop offset="0.07" stop-opacity="0.01"/><stop offset="0.36" stop-opacity="0.28"/><stop offset="0.57" stop-opacity="0.43"/><stop offset="0.79" stop-opacity="0.51"/><stop offset="1.00" stop-opacity="0.55"/></linearGradient><linearGradient id="g153" gradientUnits="userSpaceOnUse" x1="231.5" y1="26.0" x2="1311.0" y2="590.2"><stop offset="0.00" stop-opacity="0.00"/><stop offset="0.07" stop-opacity="0.01"/><stop offset="0.14" stop-opacity="0.05"/><stop offset="0.36" stop-opacity="0.26"/><stop offset="0.57" stop-opacity="0.41"/><stop offset="0.79" stop-opacity="0.49"/><stop offset="1.00" stop-opacity="0.54"/></linearGradient><linearGradient id="g154" gradientUnits="userSpaceOnUse" x1="233.7" y1="26.0" x2="1311.0" y2="553.4"><stop offset="0.00" stop-opacity="0.00"/><stop offset="0.07" stop-opacity="0.00"/><stop offset="0.14" stop-opacity="0.05"/><stop offset="0.43" stop-opacity="0.29"/><stop offset="0.57" stop-opacity="0.39"/><stop offset="0.79" stop-opacity="0.47"/><stop offset="1.00" stop-opacity="0.52"/></linearGradient><linearGradient id="g155" gradientUnits="userSpaceOnUse" x1="235.9" y1="26.0" x2="1311.0" y2="520.8"><stop offset="0.00" stop-opacity="0.00"/><stop offset="0.07" stop-opacity="0.00"/><stop offset="0.14" stop-opacity="0.04"/><stop offset="0.43" stop-opacity="0.27"/><stop offset="0.57" stop-opacity="0.36"/><stop offset="0.79" stop-opacity="0.45"/><stop offset="1.00" stop-opacity="0.51"/></linearGradient><linearGradient id="g156" gradientUnits="userSpaceOnUse" x1="238.1" y1="26.0" x2="1311.0" y2="491.9"><stop offset="0.00" stop-opacity="0.02"/><stop offset="0.07" stop-opacity="0.12"/><stop offset="0.21" style="stop-color:#5a5a5a" stop-opacity="0.26"/><stop offset="0.36" style="stop-color:#5e5e5e" stop-opacity="0.38"/><stop offset="0.50" style="stop-color:#606060" stop-opacity="0.47"/><stop offset="0.71" style="stop-color:#616161" stop-opacity="0.56"/><stop offset="1.00" style="stop-color:#626262" stop-opacity="0.61"/></linearGradient><linearGradient id="g157" gradientUnits="userSpaceOnUse" x1="240.4" y1="26.0" x2="1311.0" y2="465.9"><stop offset="0.00" stop-opacity="0.00"/><stop offset="0.07" stop-opacity="0.00"/><stop offset="0.14" stop-opacity="0.03"/><stop offset="0.43" stop-opacity="0.24"/><stop offset="0.64" stop-opacity="0.36"/><stop offset="1.00" stop-opacity="0.47"/></linearGradient><linearGradient id="g158" gradientUnits="userSpaceOnUse" x1="242.6" y1="26.0" x2="1311.0" y2="442.5"><stop offset="0.00" stop-opacity="0.00"/><stop offset="0.07" stop-opacity="0.00"/><stop offset="0.14" stop-opacity="0.03"/><stop offset="0.43" stop-opacity="0.22"/><stop offset="0.64" stop-opacity="0.35"/><stop offset="1.00" stop-opacity="0.46"/></linearGradient><linearGradient id="g159" gradientUnits="userSpaceOnUse" x1="244.8" y1="26.0" x2="1311.0" y2="421.3"><stop offset="0.00" stop-opacity="0.00"/><stop offset="0.14" stop-opacity="0.02"/><stop offset="0.50" stop-opacity="0.25"/><stop offset="0.64" stop-opacity="0.33"/><stop offset="1.00" stop-opacity="0.44"/></linearGradient><linearGradient id="g160" gradientUnits="userSpaceOnUse" x1="247.1" y1="26.0" x2="1311.0" y2="402.0"><stop offset="0.00" stop-opacity="0.00"/><stop offset="0.14" stop-opacity="0.02"/><stop offset="0.64" stop-opacity="0.31"/><stop offset="1.00" stop-opacity="0.43"/></linearGradient><linearGradient id="g161" gradientUnits="userSpaceOnUse" x1="249.3" y1="26.0" x2="1311.0" y2="384.4"><stop offset="0.00" stop-opacity="0.00"/><stop offset="0.14" stop-opacity="0.02"/><stop offset="0.64" stop-opacity="0.30"/><stop offset="1.00" stop-opacity="0.41"/></linearGradient><linearGradient id="g162" gradientUnits="userSpaceOnUse" x1="251.6" y1="26.0" x2="1311.0" y2="368.3"><stop offset="0.00" stop-opacity="0.00"/><stop offset="0.14" stop-opacity="0.01"/><stop offset="0.64" stop-opacity="0.28"/><stop offset="1.00" stop-opacity="0.40"/></linearGradient><linearGradient id="g163" gradientUnits="userSpaceOnUse" x1="253.9" y1="26.0" x2="1311.0" y2="353.4"><stop offset="0.00" stop-opacity="0.00"/><stop offset="0.14" stop-opacity="0.01"/><stop offset="0.64" stop-opacity="0.27"/><stop offset="1.00" stop-opacity="0.38"/></linearGradient><linearGradient id="g164" gradientUnits="userSpaceOnUse" x1="256.2" y1="26.0" x2="1311.0" y2="339.6"><stop offset="0.00" stop-opacity="0.00"/><stop offset="0.14" stop-opacity="0.01"/><stop offset="0.64" stop-opacity="0.26"/><stop offset="1.00" stop-opacity="0.37"/></linearGradient><linearGradient id="g165" gradientUnits="userSpaceOnUse" x1="258.4" y1="26.0" x2="1311.0" y2="326.9"><stop offset="0.00" stop-opacity="0.00"/><stop offset="0.14" stop-opacity="0.01"/><stop offset="0.64" stop-opacity="0.25"/><stop offset="1.00" stop-opacity="0.36"/></linearGradient><linearGradient id="g166" gradientUnits="userSpaceOnUse" x1="260.7" y1="26.0" x2="1311.0" y2="315.0"><stop offset="0.00" stop-opacity="0.02"/><stop offset="0.07" stop-opacity="0.09"/><stop offset="0.21" style="stop-color:#575757" stop-opacity="0.19"/><stop offset="0.50" style="stop-color:#5d5d5d" stop-opacity="0.35"/><stop offset="0.71" style="stop-color:#5f5f5f" stop-opacity="0.43"/><stop offset="1.00" style="stop-color:#616161" stop-opacity="0.48"/></linearGradient><linearGradient id="g167" gradientUnits="userSpaceOnUse" x1="263.1" y1="26.0" x2="1311.0" y2="304.0"><stop offset="0.00" stop-opacity="0.00"/><stop offset="0.14" stop-opacity="0.01"/><stop offset="0.21" stop-opacity="0.03"/><stop offset="0.64" stop-opacity="0.23"/><stop offset="1.00" stop-opacity="0.33"/></linearGradient><linearGradient id="g168" gradientUnits="userSpaceOnUse" x1="265.4" y1="26.0" x2="1311.0" y2="293.7"><stop offset="0.00" stop-opacity="0.00"/><stop offset="0.14" stop-opacity="0.01"/><stop offset="0.21" stop-opacity="0.03"/><stop offset="0.64" stop-opacity="0.22"/><stop offset="1.00" stop-opacity="0.32"/></linearGradient><linearGradient id="g169" gradientUnits="userSpaceOnUse" x1="267.7" y1="26.0" x2="1311.0" y2="284.1"><stop offset="0.00" stop-opacity="0.00"/><stop offset="0.21" stop-opacity="0.02"/><stop offset="0.64" stop-opacity="0.21"/><stop offset="1.00" stop-opacity="0.31"/></linearGradient><linearGradient id="g170" gradientUnits="userSpaceOnUse" x1="270.0" y1="26.0" x2="1311.0" y2="275.0"><stop offset="0.00" stop-opacity="0.00"/><stop offset="0.21" stop-opacity="0.02"/><stop offset="0.64" stop-opacity="0.20"/><stop offset="1.00" stop-opacity="0.30"/></linearGradient><linearGradient id="g171" gradientUnits="userSpaceOnUse" x1="272.4" y1="26.0" x2="1311.0" y2="266.5"><stop offset="0.00" stop-opacity="0.00"/><stop offset="0.21" stop-opacity="0.02"/><stop offset="0.71" stop-opacity="0.21"/><stop offset="1.00" stop-opacity="0.29"/></linearGradient><linearGradient id="g172" gradientUnits="userSpaceOnUse" x1="274.7" y1="26.0" x2="1311.0" y2="258.5"><stop offset="0.00" stop-opacity="0.00"/><stop offset="0.21" stop-opacity="0.02"/><stop offset="0.71" stop-opacity="0.21"/><stop offset="1.00" stop-opacity="0.28"/></linearGradient><linearGradient id="g173" gradientUnits="userSpaceOnUse" x1="277.1" y1="26.0" x2="1311.0" y2="251.0"><stop offset="0.00" stop-opacity="0.00"/><stop offset="0.21" stop-opacity="0.02"/><stop offset="0.71" stop-opacity="0.20"/><stop offset="1.00" stop-opacity="0.27"/></linearGradient><linearGradient id="g174" gradientUnits="userSpaceOnUse" x1="279.5" y1="26.0" x2="1311.0" y2="243.8"><stop offset="0.00" stop-opacity="0.00"/><stop offset="0.21" stop-opacity="0.01"/><stop offset="0.71" stop-opacity="0.19"/><stop offset="1.00" stop-opacity="0.26"/></linearGradient><linearGradient id="g175" gradientUnits="userSpaceOnUse" x1="281.8" y1="26.0" x2="1311.0" y2="237.1"><stop offset="0.00" stop-opacity="0.00"/><stop offset="0.21" stop-opacity="0.01"/><stop offset="0.71" stop-opacity="0.18"/><stop offset="1.00" stop-opacity="0.25"/></linearGradient><linearGradient id="g176" gradientUnits="userSpaceOnUse" x1="284.2" y1="26.0" x2="1311.0" y2="230.7"><stop offset="0.00" stop-opacity="0.02"/><stop offset="0.14" stop-opacity="0.11"/><stop offset="0.50" style="stop-color:#5b5b5b" stop-opacity="0.28"/><stop offset="0.71" style="stop-color:#5d5d5d" stop-opacity="0.34"/><stop offset="1.00" style="stop-color:#5f5f5f" stop-opacity="0.39"/></linearGradient><linearGradient id="g177" gradientUnits="userSpaceOnUse" x1="286.6" y1="26.0" x2="1311.0" y2="224.6"><stop offset="0.00" stop-opacity="0.00"/><stop offset="0.21" stop-opacity="0.01"/><stop offset="0.71" stop-opacity="0.17"/><stop offset="1.00" stop-opacity="0.24"/></linearGradient><linearGradient id="g178" gradientUnits="userSpaceOnUse" x1="289.0" y1="26.0" x2="1311.0" y2="218.9"><stop offset="0.00" stop-opacity="0.00"/><stop offset="0.21" stop-opacity="0.01"/><stop offset="0.71" stop-opacity="0.16"/><stop offset="1.00" stop-opacity="0.23"/></linearGradient><linearGradient id="g179" gradientUnits="userSpaceOnUse" x1="291.5" y1="26.0" x2="1311.0" y2="213.4"><stop offset="0.00" stop-opacity="0.00"/><stop offset="0.21" stop-opacity="0.01"/><stop offset="1.00" stop-opacity="0.22"/></linearGradient><linearGradient id="g180" gradientUnits="userSpaceOnUse" x1="293.9" y1="26.0" x2="1311.0" y2="208.1"><stop offset="0.00" stop-opacity="0.00"/><stop offset="0.21" stop-opacity="0.01"/><stop offset="1.00" stop-opacity="0.22"/></linearGradient><linearGradient id="g181" gradientUnits="userSpaceOnUse" x1="296.3" y1="26.0" x2="1311.0" y2="203.2"><stop offset="0.00" stop-opacity="0.00"/><stop offset="0.21" stop-opacity="0.01"/><stop offset="1.00" stop-opacity="0.21"/></linearGradient><linearGradient id="g182" gradientUnits="userSpaceOnUse" x1="298.8" y1="26.0" x2="1311.0" y2="198.4"><stop offset="0.00" stop-opacity="0.00"/><stop offset="0.29" stop-opacity="0.02"/><stop offset="1.00" stop-opacity="0.20"/></linearGradient><linearGradient id="g183" gradientUnits="userSpaceOnUse" x1="301.2" y1="26.0" x2="1311.0" y2="193.8"><stop offset="0.00" stop-opacity="0.00"/><stop offset="0.29" stop-opacity="0.02"/><stop offset="1.00" stop-opacity="0.20"/></linearGradient><linearGradient id="g184" gradientUnits="userSpaceOnUse" x1="303.7" y1="26.0" x2="1311.0" y2="189.5"><stop offset="0.00" stop-opacity="0.00"/><stop offset="0.29" stop-opacity="0.02"/><stop offset="1.00" stop-opacity="0.19"/></linearGradient><linearGradient id="g185" gradientUnits="userSpaceOnUse" x1="306.2" y1="26.0" x2="1311.0" y2="185.3"><stop offset="0.00" stop-opacity="0.00"/><stop offset="0.29" stop-opacity="0.01"/><stop offset="1.00" stop-opacity="0.19"/></linearGradient><linearGradient id="g186" gradientUnits="userSpaceOnUse" x1="308.7" y1="26.0" x2="1311.0" y2="181.3"><stop offset="0.00" stop-opacity="0.03"/><stop offset="0.14" stop-opacity="0.10"/><stop offset="0.50" style="stop-color:#595959" stop-opacity="0.23"/><stop offset="1.00" style="stop-color:#5e5e5e" stop-opacity="0.33"/></linearGradient><linearGradient id="g187" gradientUnits="userSpaceOnUse" x1="311.1" y1="26.0" x2="1311.0" y2="177.5"><stop offset="0.00" stop-opacity="0.00"/><stop offset="0.29" stop-opacity="0.01"/><stop offset="1.00" stop-opacity="0.18"/></linearGradient><linearGradient id="g188" gradientUnits="userSpaceOnUse" x1="313.7" y1="26.0" x2="1311.0" y2="173.8"><stop offset="0.00" stop-opacity="0.00"/><stop offset="0.29" stop-opacity="0.01"/><stop offset="1.00" stop-opacity="0.17"/></linearGradient><linearGradient id="g189" gradientUnits="userSpaceOnUse" x1="316.2" y1="26.0" x2="1311.0" y2="170.3"><stop offset="0.00" stop-opacity="0.00"/><stop offset="0.29" stop-opacity="0.01"/><stop offset="1.00" stop-opacity="0.17"/></linearGradient><linearGradient id="g190" gradientUnits="userSpaceOnUse" x1="318.7" y1="26.0" x2="1311.0" y2="166.9"><stop offset="0.00" stop-opacity="0.00"/><stop offset="0.29" stop-opacity="0.01"/><stop offset="1.00" stop-opacity="0.16"/></linearGradient><linearGradient id="g191" gradientUnits="userSpaceOnUse" x1="321.2" y1="26.0" x2="1311.0" y2="163.6"><stop offset="0.00" stop-opacity="0.00"/><stop offset="0.36" stop-opacity="0.02"/><stop offset="1.00" stop-opacity="0.16"/></linearGradient><linearGradient id="g192" gradientUnits="userSpaceOnUse" x1="323.8" y1="26.0" x2="1311.0" y2="160.4"><stop offset="0.00" stop-opacity="0.00"/><stop offset="0.36" stop-opacity="0.02"/><stop offset="1.00" stop-opacity="0.15"/></linearGradient><linearGradient id="g193" gradientUnits="userSpaceOnUse" x1="326.3" y1="26.0" x2="1311.0" y2="157.4"><stop offset="0.00" stop-opacity="0.00"/><stop offset="0.36" stop-opacity="0.02"/><stop offset="1.00" stop-opacity="0.15"/></linearGradient><linearGradient id="g194" gradientUnits="userSpaceOnUse" x1="328.9" y1="26.0" x2="1311.0" y2="154.5"><stop offset="0.00" stop-opacity="0.00"/><stop offset="0.36" stop-opacity="0.01"/><stop offset="1.00" stop-opacity="0.14"/></linearGradient><linearGradient id="g195" gradientUnits="userSpaceOnUse" x1="331.5" y1="26.0" x2="1311.0" y2="151.6"><stop offset="0.00" stop-opacity="0.00"/><stop offset="0.36" stop-opacity="0.01"/><stop offset="1.00" stop-opacity="0.14"/></linearGradient><linearGradient id="g196" gradientUnits="userSpaceOnUse" x1="334.1" y1="26.0" x2="1311.0" y2="148.9"><stop offset="0.00" stop-opacity="0.03"/><stop offset="0.14" stop-opacity="0.09"/><stop offset="0.50" style="stop-color:#585858" stop-opacity="0.20"/><stop offset="1.00" style="stop-color:#5d5d5d" stop-opacity="0.28"/></linearGradient><linearGradient id="g197" gradientUnits="userSpaceOnUse" x1="360.5" y1="26.0" x2="1311.0" y2="126.0"><stop offset="0.00" stop-opacity="0.03"/><stop offset="0.21" stop-opacity="0.10"/><stop offset="0.50" style="stop-color:#575757" stop-opacity="0.17"/><stop offset="1.00" style="stop-color:#5c5c5c" stop-opacity="0.25"/></linearGradient><linearGradient id="g198" gradientUnits="userSpaceOnUse" x1="388.1" y1="26.0" x2="1311.0" y2="108.9"><stop offset="0.00" stop-opacity="0.03"/><stop offset="0.43" style="stop-color:#555555" stop-opacity="0.14"/><stop offset="1.00" style="stop-color:#5b5b5b" stop-opacity="0.22"/></linearGradient><linearGradient id="g199" gradientUnits="userSpaceOnUse" x1="416.8" y1="26.0" x2="1311.0" y2="95.8"><stop offset="0.00" stop-opacity="0.03"/><stop offset="0.43" style="stop-color:#555555" stop-opacity="0.13"/><stop offset="1.00" style="stop-color:#5a5a5a" stop-opacity="0.20"/></linearGradient><linearGradient id="g200" gradientUnits="userSpaceOnUse" x1="446.8" y1="26.0" x2="1311.0" y2="85.2"><stop offset="0.00" stop-opacity="0.03"/><stop offset="0.43" style="stop-color:#555555" stop-opacity="0.12"/><stop offset="1.00" style="stop-color:#595959" stop-opacity="0.18"/></linearGradient><linearGradient id="g201" gradientUnits="userSpaceOnUse" x1="478.2" y1="26.0" x2="1311.0" y2="76.7"><stop offset="0.00" style="stop-color:#616161" stop-opacity="0.05"/><stop offset="0.21" style="stop-color:#666666" stop-opacity="0.08"/><stop offset="1.00" style="stop-color:#666666" stop-opacity="0.16"/></linearGradient><linearGradient id="g202" gradientUnits="userSpaceOnUse" x1="511.0" y1="26.0" x2="1311.0" y2="69.6"><stop offset="0.00" stop-opacity="0.04"/><stop offset="0.43" stop-opacity="0.11"/><stop offset="1.00" style="stop-color:#585858" stop-opacity="0.15"/></linearGradient><linearGradient id="g203" gradientUnits="userSpaceOnUse" x1="545.4" y1="26.0" x2="1311.0" y2="63.6"><stop offset="0.00" stop-opacity="0.04"/><stop offset="0.36" stop-opacity="0.09"/><stop offset="1.00" style="stop-color:#575757" stop-opacity="0.14"/></linearGradient><linearGradient id="g204" gradientUnits="userSpaceOnUse" x1="581.4" y1="26.0" x2="1311.0" y2="58.4"><stop offset="0.00" stop-opacity="0.04"/><stop offset="0.36" stop-opacity="0.09"/><stop offset="1.00" style="stop-color:#575757" stop-opacity="0.13"/></linearGradient><linearGradient id="g205" gradientUnits="userSpaceOnUse" x1="619.1" y1="26.0" x2="1311.0" y2="54.0"><stop offset="0.00" stop-opacity="0.05"/><stop offset="0.36" stop-opacity="0.09"/><stop offset="1.00" style="stop-color:#565656" stop-opacity="0.12"/></linearGradient><linearGradient id="g206" gradientUnits="userSpaceOnUse" x1="658.8" y1="26.0" x2="1311.0" y2="50.1"><stop offset="0.00" stop-opacity="0.05"/><stop offset="1.00" style="stop-color:#565656" stop-opacity="0.11"/></linearGradient><linearGradient id="g207" gradientUnits="userSpaceOnUse" x1="700.6" y1="26.0" x2="1311.0" y2="46.7"><stop offset="0.00" stop-opacity="0.05"/><stop offset="1.00" style="stop-color:#565656" stop-opacity="0.11"/></linearGradient><linearGradient id="g208" gradientUnits="userSpaceOnUse" x1="744.5" y1="26.0" x2="1311.0" y2="43.6"><stop offset="0.00" stop-opacity="0.05"/><stop offset="1.00" style="stop-color:#555555" stop-opacity="0.10"/></linearGradient><linearGradient id="g209" gradientUnits="userSpaceOnUse" x1="790.9" y1="26.0" x2="1311.0" y2="40.9"><stop offset="0.00" stop-opacity="0.05"/><stop offset="1.00" style="stop-color:#555555" stop-opacity="0.10"/></linearGradient><linearGradient id="g210" gradientUnits="userSpaceOnUse" x1="839.9" y1="26.0" x2="1311.0" y2="38.5"><stop offset="0.00" stop-opacity="0.05"/><stop offset="1.00" style="stop-color:#555555" stop-opacity="0.09"/></linearGradient><linearGradient id="g211" gradientUnits="userSpaceOnUse" x1="891.8" y1="26.0" x2="1311.0" y2="36.3"><stop offset="0.00" style="stop-color:#656565" stop-opacity="0.06"/><stop offset="1.00" style="stop-color:#666666" stop-opacity="0.09"/></linearGradient><linearGradient id="g212" gradientUnits="userSpaceOnUse" x1="946.7" y1="26.0" x2="1311.0" y2="34.3"><stop offset="0.00" stop-opacity="0.05"/><stop offset="1.00" style="stop-color:#555555" stop-opacity="0.08"/></linearGradient><linearGradient id="g213" gradientUnits="userSpaceOnUse" x1="1005.0" y1="26.0" x2="1311.0" y2="32.5"><stop offset="0.00" stop-opacity="0.06"/><stop offset="1.00" style="stop-color:#555555" stop-opacity="0.08"/></linearGradient><linearGradient id="g214" gradientUnits="userSpaceOnUse" x1="1067.0" y1="26.0" x2="1311.0" y2="30.8"><stop offset="0.00" stop-opacity="0.06"/><stop offset="1.00" stop-opacity="0.08"/></linearGradient><linearGradient id="g215" gradientUnits="userSpaceOnUse" x1="1133.1" y1="26.0" x2="1311.0" y2="29.2"><stop offset="0.00" stop-opacity="0.06"/><stop offset="1.00" stop-opacity="0.07"/></linearGradient><linearGradient id="g216" gradientUnits="userSpaceOnUse" x1="1203.6" y1="26.0" x2="1311.0" y2="27.8"><stop offset="0.00" stop-opacity="0.06"/><stop offset="1.00" stop-opacity="0.07"/></linearGradient><linearGradient id="g217" gradientUnits="userSpaceOnUse" x1="1279.1" y1="26.0" x2="1311.0" y2="26.5"><stop offset="0.00" stop-opacity="0.06"/><stop offset="1.00" stop-opacity="0.06"/></linearGradient><linearGradient id="axx0" gradientUnits="userSpaceOnUse" x1="216.4" y1="26.0" x2="595.4" y2="397.2"><stop offset="0.000" style="stop-color:#ff3352" stop-opacity="0.114"/><stop offset="0.081" style="stop-color:#ff3352" stop-opacity="0.194"/><stop offset="0.162" style="stop-color:#ff3352" stop-opacity="0.246"/><stop offset="0.243" style="stop-color:#ff3352" stop-opacity="0.286"/><stop offset="0.324" style="stop-color:#ff3352" stop-opacity="0.320"/><stop offset="0.405" style="stop-color:#ff3352" stop-opacity="0.348"/><stop offset="0.486" style="stop-color:#ff3352" stop-opacity="0.373"/><stop offset="0.568" style="stop-color:#ff3352" stop-opacity="0.394"/><stop offset="0.649" style="stop-color:#ff3352" stop-opacity="0.412"/><stop offset="0.730" style="stop-color:#ff3352" stop-opacity="0.427"/><stop offset="0.811" style="stop-color:#ff3352" stop-opacity="0.440"/><stop offset="0.892" style="stop-color:#ff3352" stop-opacity="0.451"/><stop offset="0.973" style="stop-color:#ff3352" stop-opacity="0.460"/><stop offset="1.000" style="stop-color:#ff3352" stop-opacity="0.463"/></linearGradient><linearGradient id="axx1" gradientUnits="userSpaceOnUse" x1="677.4" y1="477.5" x2="1094.5" y2="886.0"><stop offset="0.000" style="stop-color:#ff3352" stop-opacity="0.479"/><stop offset="0.081" style="stop-color:#ff3352" stop-opacity="0.484"/><stop offset="0.161" style="stop-color:#ff3352" stop-opacity="0.487"/><stop offset="0.242" style="stop-color:#ff3352" stop-opacity="0.490"/><stop offset="0.323" style="stop-color:#ff3352" stop-opacity="0.492"/><stop offset="0.404" style="stop-color:#ff3352" stop-opacity="0.494"/><stop offset="0.484" style="stop-color:#ff3352" stop-opacity="0.495"/><stop offset="0.565" style="stop-color:#ff3352" stop-opacity="0.496"/><stop offset="0.646" style="stop-color:#ff3352" stop-opacity="0.497"/><stop offset="0.726" style="stop-color:#ff3352" stop-opacity="0.497"/><stop offset="0.807" style="stop-color:#ff3352" stop-opacity="0.498"/><stop offset="0.888" style="stop-color:#ff3352" stop-opacity="0.498"/><stop offset="0.968" style="stop-color:#ff3352" stop-opacity="0.498"/><stop offset="1.000" style="stop-color:#ff3352" stop-opacity="0.499"/></linearGradient><linearGradient id="axy0" gradientUnits="userSpaceOnUse" x1="0.0" y1="595.0" x2="607.4" y2="466.0"><stop offset="0.000" style="stop-color:#8bdc00" stop-opacity="0.431"/><stop offset="0.083" style="stop-color:#8bdc00" stop-opacity="0.431"/><stop offset="0.165" style="stop-color:#8bdc00" stop-opacity="0.432"/><stop offset="0.248" style="stop-color:#8bdc00" stop-opacity="0.432"/><stop offset="0.331" style="stop-color:#8bdc00" stop-opacity="0.433"/><stop offset="0.414" style="stop-color:#8bdc00" stop-opacity="0.433"/><stop offset="0.496" style="stop-color:#8bdc00" stop-opacity="0.433"/><stop offset="0.579" style="stop-color:#8bdc00" stop-opacity="0.433"/><stop offset="0.662" style="stop-color:#8bdc00" stop-opacity="0.433"/><stop offset="0.745" style="stop-color:#8bdc00" stop-opacity="0.432"/><stop offset="0.827" style="stop-color:#8bdc00" stop-opacity="0.432"/><stop offset="0.910" style="stop-color:#8bdc00" stop-opacity="0.431"/><stop offset="0.993" style="stop-color:#8bdc00" stop-opacity="0.430"/><stop offset="1.000" style="stop-color:#8bdc00" stop-opacity="0.430"/></linearGradient><linearGradient id="axy1" gradientUnits="userSpaceOnUse" x1="725.4" y1="440.9" x2="1311.0" y2="316.6"><stop offset="0.000" style="stop-color:#8bdc00" stop-opacity="0.426"/><stop offset="0.082" style="stop-color:#8bdc00" stop-opacity="0.424"/><stop offset="0.164" style="stop-color:#8bdc00" stop-opacity="0.421"/><stop offset="0.246" style="stop-color:#8bdc00" stop-opacity="0.418"/><stop offset="0.328" style="stop-color:#8bdc00" stop-opacity="0.415"/><stop offset="0.410" style="stop-color:#8bdc00" stop-opacity="0.412"/><stop offset="0.493" style="stop-color:#8bdc00" stop-opacity="0.408"/><stop offset="0.575" style="stop-color:#8bdc00" stop-opacity="0.403"/><stop offset="0.657" style="stop-color:#8bdc00" stop-opacity="0.399"/><stop offset="0.739" style="stop-color:#8bdc00" stop-opacity="0.393"/><stop offset="0.821" style="stop-color:#8bdc00" stop-opacity="0.388"/><stop offset="0.903" style="stop-color:#8bdc00" stop-opacity="0.382"/><stop offset="0.985" style="stop-color:#8bdc00" stop-opacity="0.376"/><stop offset="1.000" style="stop-color:#8bdc00" stop-opacity="0.375"/></linearGradient><clipPath id="cubeclip"><polygon points="587.7,400.0 679.0,383.3 725.1,419.2 723.0,511.8 629.5,534.6 592.1,489.0"/></clipPath></defs><rect x="0" y="0" width="1587" height="973" fill="#161616"/><rect x="0" y="0" width="1587" height="26" fill="#181818"/><rect x="0" y="955" width="1587" height="18" fill="#181818"/><g clip-path="url(#vpclip)"><rect x="0" y="26" width="1311" height="860" fill="#3f3f3f"/><g stroke="#545454" stroke-width="1.4" fill="none"><line x1="0.0" y1="26.8" x2="41.1" y2="26.0" stroke="url(#g1)"/><line x1="0.0" y1="29.2" x2="155.9" y2="26.0" stroke="url(#g2)"/><line x1="0.0" y1="32.6" x2="300.8" y2="26.0" stroke="url(#g3)"/><line x1="0.0" y1="33.0" x2="317.4" y2="26.0" stroke="url(#g4)"/><line x1="0.0" y1="33.4" x2="334.5" y2="26.0" stroke="url(#g5)"/><line x1="0.0" y1="33.8" x2="352.0" y2="26.0" stroke="url(#g6)"/><line x1="0.0" y1="34.3" x2="370.0" y2="26.0" stroke="url(#g7)"/><line x1="0.0" y1="34.8" x2="388.5" y2="26.0" stroke="url(#g8)"/><line x1="0.0" y1="35.2" x2="407.6" y2="26.0" stroke="url(#g9)"/><line x1="0.0" y1="35.8" x2="427.2" y2="26.0" stroke="url(#g10)"/><line x1="0.0" y1="36.3" x2="447.3" y2="26.0" stroke="url(#g11)"/><line x1="0.0" y1="36.9" x2="468.1" y2="26.0" stroke="url(#g12)"/><line x1="0.0" y1="37.5" x2="489.5" y2="26.0" stroke="url(#g13)"/><line x1="0.0" y1="38.1" x2="511.5" y2="26.0" stroke="url(#g14)"/><line x1="0.0" y1="38.8" x2="534.2" y2="26.0" stroke="url(#g15)"/><line x1="0.0" y1="39.4" x2="557.7" y2="26.0" stroke="url(#g16)"/><line x1="0.0" y1="40.2" x2="581.9" y2="26.0" stroke="url(#g17)"/><line x1="0.0" y1="40.9" x2="606.8" y2="26.0" stroke="url(#g18)"/><line x1="0.0" y1="41.7" x2="632.7" y2="26.0" stroke="url(#g19)"/><line x1="0.0" y1="42.6" x2="659.3" y2="26.0" stroke="url(#g20)"/><line x1="0.0" y1="43.5" x2="687.0" y2="26.0" stroke="url(#g21)"/><line x1="0.0" y1="44.5" x2="715.5" y2="26.0" stroke="url(#g22)"/><line x1="0.0" y1="45.5" x2="745.1" y2="26.0" stroke="url(#g23)"/><line x1="0.0" y1="46.6" x2="775.7" y2="26.0" stroke="url(#g24)"/><line x1="0.0" y1="47.7" x2="807.5" y2="26.0" stroke="url(#g25)"/><line x1="0.0" y1="49.0" x2="840.5" y2="26.0" stroke="url(#g26)"/><line x1="0.0" y1="50.3" x2="874.7" y2="26.0" stroke="url(#g27)"/><line x1="0.0" y1="51.7" x2="910.3" y2="26.0" stroke="url(#g28)"/><line x1="0.0" y1="53.3" x2="947.3" y2="26.0" stroke="url(#g29)"/><line x1="0.0" y1="54.9" x2="985.8" y2="26.0" stroke="url(#g30)"/><line x1="0.0" y1="56.8" x2="1025.8" y2="26.0" stroke="url(#g31)"/><line x1="0.0" y1="58.7" x2="1067.6" y2="26.0" stroke="url(#g32)"/><line x1="0.0" y1="60.9" x2="1111.2" y2="26.0" stroke="url(#g33)"/><line x1="0.0" y1="63.2" x2="1156.7" y2="26.0" stroke="url(#g34)"/><line x1="0.0" y1="65.8" x2="1204.3" y2="26.0" stroke="url(#g35)"/><line x1="0.0" y1="68.6" x2="1254.0" y2="26.0" stroke="url(#g36)"/><line x1="0.0" y1="71.8" x2="1306.1" y2="26.0" stroke="url(#g37)"/><line x1="0.0" y1="75.4" x2="1311.0" y2="27.8" stroke="url(#g38)"/><line x1="0.0" y1="79.4" x2="1311.0" y2="30.0" stroke="url(#g39)"/><line x1="0.0" y1="83.9" x2="1311.0" y2="32.6" stroke="url(#g40)"/><line x1="0.0" y1="89.1" x2="1311.0" y2="35.5" stroke="url(#g41)"/><line x1="0.0" y1="95.2" x2="1311.0" y2="38.8" stroke="url(#g42)"/><line x1="0.0" y1="102.2" x2="1311.0" y2="42.7" stroke="url(#g43)"/><line x1="0.0" y1="110.5" x2="1311.0" y2="47.3" stroke="url(#g44)"/><line x1="0.0" y1="120.6" x2="1311.0" y2="52.9" stroke="url(#g45)"/><line x1="0.0" y1="132.9" x2="1311.0" y2="59.7" stroke="url(#g46)"/><line x1="0.0" y1="148.3" x2="1311.0" y2="68.3" stroke="url(#g47)"/><line x1="0.0" y1="168.2" x2="1311.0" y2="79.4" stroke="url(#g48)"/><line x1="0.0" y1="170.6" x2="1311.0" y2="80.7" stroke="url(#g49)"/><line x1="0.0" y1="173.0" x2="1311.0" y2="82.0" stroke="url(#g50)"/><line x1="0.0" y1="175.4" x2="1311.0" y2="83.4" stroke="url(#g51)"/><line x1="0.0" y1="178.0" x2="1311.0" y2="84.8" stroke="url(#g52)"/><line x1="0.0" y1="180.6" x2="1311.0" y2="86.3" stroke="url(#g53)"/><line x1="0.0" y1="183.3" x2="1311.0" y2="87.8" stroke="url(#g54)"/><line x1="0.0" y1="186.1" x2="1311.0" y2="89.3" stroke="url(#g55)"/><line x1="0.0" y1="189.0" x2="1311.0" y2="90.9" stroke="url(#g56)"/><line x1="0.0" y1="192.0" x2="1311.0" y2="92.6" stroke="url(#g57)"/><line x1="0.0" y1="195.0" x2="1311.0" y2="94.3" stroke="url(#g58)"/><line x1="0.0" y1="198.2" x2="1311.0" y2="96.1" stroke="url(#g59)"/><line x1="0.0" y1="201.6" x2="1311.0" y2="97.9" stroke="url(#g60)"/><line x1="0.0" y1="205.0" x2="1311.0" y2="99.8" stroke="url(#g61)"/><line x1="0.0" y1="208.5" x2="1311.0" y2="101.8" stroke="url(#g62)"/><line x1="0.0" y1="212.2" x2="1311.0" y2="103.8" stroke="url(#g63)"/><line x1="0.0" y1="216.1" x2="1311.0" y2="106.0" stroke="url(#g64)"/><line x1="0.0" y1="220.0" x2="1311.0" y2="108.2" stroke="url(#g65)"/><line x1="0.0" y1="224.2" x2="1311.0" y2="110.5" stroke="url(#g66)"/><line x1="0.0" y1="228.5" x2="1311.0" y2="112.9" stroke="url(#g67)"/><line x1="0.0" y1="232.9" x2="1311.0" y2="115.4" stroke="url(#g68)"/><line x1="0.0" y1="237.6" x2="1311.0" y2="118.0" stroke="url(#g69)"/><line x1="0.0" y1="242.5" x2="1311.0" y2="120.7" stroke="url(#g70)"/><line x1="0.0" y1="247.6" x2="1311.0" y2="123.5" stroke="url(#g71)"/><line x1="0.0" y1="252.9" x2="1311.0" y2="126.5" stroke="url(#g72)"/><line x1="0.0" y1="258.5" x2="1311.0" y2="129.5" stroke="url(#g73)"/><line x1="0.0" y1="264.3" x2="1311.0" y2="132.8" stroke="url(#g74)"/><line x1="0.0" y1="270.4" x2="1311.0" y2="136.2" stroke="url(#g75)"/><line x1="0.0" y1="276.8" x2="1311.0" y2="139.7" stroke="url(#g76)"/><line x1="0.0" y1="283.5" x2="1311.0" y2="143.5" stroke="url(#g77)"/><line x1="0.0" y1="290.6" x2="1311.0" y2="147.4" stroke="url(#g78)"/><line x1="0.0" y1="298.1" x2="1311.0" y2="151.6" stroke="url(#g79)"/><line x1="0.0" y1="306.0" x2="1311.0" y2="155.9" stroke="url(#g80)"/><line x1="0.0" y1="314.3" x2="1311.0" y2="160.6" stroke="url(#g81)"/><line x1="0.0" y1="323.1" x2="1311.0" y2="165.5" stroke="url(#g82)"/><line x1="0.0" y1="332.5" x2="1311.0" y2="170.7" stroke="url(#g83)"/><line x1="0.0" y1="342.4" x2="1311.0" y2="176.2" stroke="url(#g84)"/><line x1="0.0" y1="352.9" x2="1311.0" y2="182.0" stroke="url(#g85)"/><line x1="0.0" y1="364.2" x2="1311.0" y2="188.3" stroke="url(#g86)"/><line x1="0.0" y1="376.2" x2="1311.0" y2="195.0" stroke="url(#g87)"/><line x1="0.0" y1="389.1" x2="1311.0" y2="202.1" stroke="url(#g88)"/><line x1="0.0" y1="402.9" x2="1311.0" y2="209.8" stroke="url(#g89)"/><line x1="0.0" y1="417.7" x2="1311.0" y2="218.0" stroke="url(#g90)"/><line x1="0.0" y1="433.8" x2="1311.0" y2="227.0" stroke="url(#g91)"/><line x1="0.0" y1="451.1" x2="1311.0" y2="236.6" stroke="url(#g92)"/><line x1="0.0" y1="469.9" x2="1311.0" y2="247.1" stroke="url(#g93)"/><line x1="0.0" y1="490.5" x2="1311.0" y2="258.5" stroke="url(#g94)"/><line x1="0.0" y1="512.9" x2="1311.0" y2="270.9" stroke="url(#g95)"/><line x1="0.0" y1="537.6" x2="1311.0" y2="284.7" stroke="url(#g96)"/><line x1="0.0" y1="564.8" x2="1311.0" y2="299.8" stroke="url(#g97)"/><line x1="0.0" y1="628.7" x2="1311.0" y2="335.3" stroke="url(#g98)"/><line x1="0.0" y1="666.5" x2="1311.0" y2="356.3" stroke="url(#g99)"/><line x1="0.0" y1="709.2" x2="1311.0" y2="380.0" stroke="url(#g100)"/><line x1="0.0" y1="757.9" x2="1311.0" y2="407.1" stroke="url(#g101)"/><line x1="0.0" y1="814.0" x2="1311.0" y2="438.2" stroke="url(#g102)"/><line x1="0.0" y1="879.1" x2="1311.0" y2="474.4" stroke="url(#g103)"/><line x1="208.4" y1="886.0" x2="1311.0" y2="517.0" stroke="url(#g104)"/><line x1="441.0" y1="886.0" x2="1311.0" y2="567.9" stroke="url(#g105)"/><line x1="675.5" y1="886.0" x2="1311.0" y2="629.7" stroke="url(#g106)"/><line x1="911.7" y1="886.0" x2="1311.0" y2="706.3" stroke="url(#g107)"/><line x1="1149.9" y1="886.0" x2="1311.0" y2="803.9" stroke="url(#g108)"/><line x1="35.7" y1="26.0" x2="0.0" y2="29.7" stroke="url(#g109)"/><line x1="51.2" y1="26.0" x2="0.0" y2="31.9" stroke="url(#g110)"/><line x1="67.2" y1="26.0" x2="0.0" y2="34.7" stroke="url(#g111)"/><line x1="83.7" y1="26.0" x2="0.0" y2="38.3" stroke="url(#g112)"/><line x1="100.8" y1="26.0" x2="0.0" y2="43.4" stroke="url(#g113)"/><line x1="118.4" y1="26.0" x2="-0.0" y2="51.0" stroke="url(#g114)"/><line x1="136.7" y1="26.0" x2="0.0" y2="63.3" stroke="url(#g115)"/><line x1="153.6" y1="26.0" x2="0.0" y2="83.5" stroke="url(#g116)"/><line x1="155.6" y1="26.0" x2="0.0" y2="86.8" stroke="url(#g117)"/><line x1="157.5" y1="26.0" x2="-0.0" y2="90.4" stroke="url(#g118)"/><line x1="159.4" y1="26.0" x2="0.0" y2="94.4" stroke="url(#g119)"/><line x1="161.3" y1="26.0" x2="-0.0" y2="98.8" stroke="url(#g120)"/><line x1="163.3" y1="26.0" x2="0.0" y2="103.7" stroke="url(#g121)"/><line x1="165.2" y1="26.0" x2="0.0" y2="109.2" stroke="url(#g122)"/><line x1="167.2" y1="26.0" x2="0.0" y2="115.3" stroke="url(#g123)"/><line x1="169.2" y1="26.0" x2="0.0" y2="122.3" stroke="url(#g124)"/><line x1="171.1" y1="26.0" x2="0.0" y2="130.4" stroke="url(#g125)"/><line x1="173.1" y1="26.0" x2="0.0" y2="139.6" stroke="url(#g126)"/><line x1="175.1" y1="26.0" x2="0.0" y2="150.5" stroke="url(#g127)"/><line x1="177.1" y1="26.0" x2="0.0" y2="163.4" stroke="url(#g128)"/><line x1="179.1" y1="26.0" x2="0.0" y2="178.9" stroke="url(#g129)"/><line x1="181.1" y1="26.0" x2="0.0" y2="197.9" stroke="url(#g130)"/><line x1="183.1" y1="26.0" x2="0.0" y2="221.9" stroke="url(#g131)"/><line x1="185.1" y1="26.0" x2="0.0" y2="252.9" stroke="url(#g132)"/><line x1="187.2" y1="26.0" x2="0.0" y2="294.8" stroke="url(#g133)"/><line x1="189.2" y1="26.0" x2="0.0" y2="354.1" stroke="url(#g134)"/><line x1="191.2" y1="26.0" x2="0.0" y2="445.1" stroke="url(#g135)"/><line x1="193.3" y1="26.0" x2="-0.0" y2="601.9" stroke="url(#g136)"/><line x1="195.4" y1="26.0" x2="10.9" y2="886.0" stroke="url(#g137)"/><line x1="197.4" y1="26.0" x2="117.5" y2="886.0" stroke="url(#g138)"/><line x1="199.5" y1="26.0" x2="224.5" y2="886.0" stroke="url(#g139)"/><line x1="201.6" y1="26.0" x2="331.9" y2="886.0" stroke="url(#g140)"/><line x1="203.7" y1="26.0" x2="439.6" y2="886.0" stroke="url(#g141)"/><line x1="205.8" y1="26.0" x2="547.8" y2="886.0" stroke="url(#g142)"/><line x1="207.9" y1="26.0" x2="656.3" y2="886.0" stroke="url(#g143)"/><line x1="210.0" y1="26.0" x2="765.3" y2="886.0" stroke="url(#g144)"/><line x1="212.1" y1="26.0" x2="874.6" y2="886.0" stroke="url(#g145)"/><line x1="214.2" y1="26.0" x2="984.4" y2="886.0" stroke="url(#g146)"/><line x1="218.5" y1="26.0" x2="1205.1" y2="886.0" stroke="url(#g147)"/><line x1="220.6" y1="26.0" x2="1311.0" y2="882.0" stroke="url(#g148)"/><line x1="222.8" y1="26.0" x2="1311.0" y2="802.9" stroke="url(#g149)"/><line x1="225.0" y1="26.0" x2="1311.0" y2="736.7" stroke="url(#g150)"/><line x1="227.1" y1="26.0" x2="1311.0" y2="680.4" stroke="url(#g151)"/><line x1="229.3" y1="26.0" x2="1311.0" y2="632.1" stroke="url(#g152)"/><line x1="231.5" y1="26.0" x2="1311.0" y2="590.2" stroke="url(#g153)"/><line x1="233.7" y1="26.0" x2="1311.0" y2="553.4" stroke="url(#g154)"/><line x1="235.9" y1="26.0" x2="1311.0" y2="520.8" stroke="url(#g155)"/><line x1="238.1" y1="26.0" x2="1311.0" y2="491.9" stroke="url(#g156)"/><line x1="240.4" y1="26.0" x2="1311.0" y2="465.9" stroke="url(#g157)"/><line x1="242.6" y1="26.0" x2="1311.0" y2="442.5" stroke="url(#g158)"/><line x1="244.8" y1="26.0" x2="1311.0" y2="421.3" stroke="url(#g159)"/><line x1="247.1" y1="26.0" x2="1311.0" y2="402.0" stroke="url(#g160)"/><line x1="249.3" y1="26.0" x2="1311.0" y2="384.4" stroke="url(#g161)"/><line x1="251.6" y1="26.0" x2="1311.0" y2="368.3" stroke="url(#g162)"/><line x1="253.9" y1="26.0" x2="1311.0" y2="353.4" stroke="url(#g163)"/><line x1="256.2" y1="26.0" x2="1311.0" y2="339.6" stroke="url(#g164)"/><line x1="258.4" y1="26.0" x2="1311.0" y2="326.9" stroke="url(#g165)"/><line x1="260.7" y1="26.0" x2="1311.0" y2="315.0" stroke="url(#g166)"/><line x1="263.1" y1="26.0" x2="1311.0" y2="304.0" stroke="url(#g167)"/><line x1="265.4" y1="26.0" x2="1311.0" y2="293.7" stroke="url(#g168)"/><line x1="267.7" y1="26.0" x2="1311.0" y2="284.1" stroke="url(#g169)"/><line x1="270.0" y1="26.0" x2="1311.0" y2="275.0" stroke="url(#g170)"/><line x1="272.4" y1="26.0" x2="1311.0" y2="266.5" stroke="url(#g171)"/><line x1="274.7" y1="26.0" x2="1311.0" y2="258.5" stroke="url(#g172)"/><line x1="277.1" y1="26.0" x2="1311.0" y2="251.0" stroke="url(#g173)"/><line x1="279.5" y1="26.0" x2="1311.0" y2="243.8" stroke="url(#g174)"/><line x1="281.8" y1="26.0" x2="1311.0" y2="237.1" stroke="url(#g175)"/><line x1="284.2" y1="26.0" x2="1311.0" y2="230.7" stroke="url(#g176)"/><line x1="286.6" y1="26.0" x2="1311.0" y2="224.6" stroke="url(#g177)"/><line x1="289.0" y1="26.0" x2="1311.0" y2="218.9" stroke="url(#g178)"/><line x1="291.5" y1="26.0" x2="1311.0" y2="213.4" stroke="url(#g179)"/><line x1="293.9" y1="26.0" x2="1311.0" y2="208.1" stroke="url(#g180)"/><line x1="296.3" y1="26.0" x2="1311.0" y2="203.2" stroke="url(#g181)"/><line x1="298.8" y1="26.0" x2="1311.0" y2="198.4" stroke="url(#g182)"/><line x1="301.2" y1="26.0" x2="1311.0" y2="193.8" stroke="url(#g183)"/><line x1="303.7" y1="26.0" x2="1311.0" y2="189.5" stroke="url(#g184)"/><line x1="306.2" y1="26.0" x2="1311.0" y2="185.3" stroke="url(#g185)"/><line x1="308.7" y1="26.0" x2="1311.0" y2="181.3" stroke="url(#g186)"/><line x1="311.1" y1="26.0" x2="1311.0" y2="177.5" stroke="url(#g187)"/><line x1="313.7" y1="26.0" x2="1311.0" y2="173.8" stroke="url(#g188)"/><line x1="316.2" y1="26.0" x2="1311.0" y2="170.3" stroke="url(#g189)"/><line x1="318.7" y1="26.0" x2="1311.0" y2="166.9" stroke="url(#g190)"/><line x1="321.2" y1="26.0" x2="1311.0" y2="163.6" stroke="url(#g191)"/><line x1="323.8" y1="26.0" x2="1311.0" y2="160.4" stroke="url(#g192)"/><line x1="326.3" y1="26.0" x2="1311.0" y2="157.4" stroke="url(#g193)"/><line x1="328.9" y1="26.0" x2="1311.0" y2="154.5" stroke="url(#g194)"/><line x1="331.5" y1="26.0" x2="1311.0" y2="151.6" stroke="url(#g195)"/><line x1="334.1" y1="26.0" x2="1311.0" y2="148.9" stroke="url(#g196)"/><line x1="360.5" y1="26.0" x2="1311.0" y2="126.0" stroke="url(#g197)"/><line x1="388.1" y1="26.0" x2="1311.0" y2="108.9" stroke="url(#g198)"/><line x1="416.8" y1="26.0" x2="1311.0" y2="95.8" stroke="url(#g199)"/><line x1="446.8" y1="26.0" x2="1311.0" y2="85.2" stroke="url(#g200)"/><line x1="478.2" y1="26.0" x2="1311.0" y2="76.7" stroke="url(#g201)"/><line x1="511.0" y1="26.0" x2="1311.0" y2="69.6" stroke="url(#g202)"/><line x1="545.4" y1="26.0" x2="1311.0" y2="63.6" stroke="url(#g203)"/><line x1="581.4" y1="26.0" x2="1311.0" y2="58.4" stroke="url(#g204)"/><line x1="619.1" y1="26.0" x2="1311.0" y2="54.0" stroke="url(#g205)"/><line x1="658.8" y1="26.0" x2="1311.0" y2="50.1" stroke="url(#g206)"/><line x1="700.6" y1="26.0" x2="1311.0" y2="46.7" stroke="url(#g207)"/><line x1="744.5" y1="26.0" x2="1311.0" y2="43.6" stroke="url(#g208)"/><line x1="790.9" y1="26.0" x2="1311.0" y2="40.9" stroke="url(#g209)"/><line x1="839.9" y1="26.0" x2="1311.0" y2="38.5" stroke="url(#g210)"/><line x1="891.8" y1="26.0" x2="1311.0" y2="36.3" stroke="url(#g211)"/><line x1="946.7" y1="26.0" x2="1311.0" y2="34.3" stroke="url(#g212)"/><line x1="1005.0" y1="26.0" x2="1311.0" y2="32.5" stroke="url(#g213)"/><line x1="1067.0" y1="26.0" x2="1311.0" y2="30.8" stroke="url(#g214)"/><line x1="1133.1" y1="26.0" x2="1311.0" y2="29.2" stroke="url(#g215)"/><line x1="1203.6" y1="26.0" x2="1311.0" y2="27.8" stroke="url(#g216)"/><line x1="1279.1" y1="26.0" x2="1311.0" y2="26.5" stroke="url(#g217)"/></g><line x1="216.4" y1="26.0" x2="595.4" y2="397.2" stroke="url(#axx0)" stroke-width="1.9"/><line x1="677.4" y1="477.5" x2="1094.5" y2="886.0" stroke="url(#axx1)" stroke-width="1.9"/><line x1="0.0" y1="595.0" x2="607.4" y2="466.0" stroke="url(#axy0)" stroke-width="1.9"/><line x1="725.4" y1="440.9" x2="1311.0" y2="316.6" stroke="url(#axy1)" stroke-width="1.9"/><polygon points="587.7,400.0 626.6,439.1 629.5,534.6 592.1,489.0" fill="#898a89"/><polygon points="626.6,439.1 725.1,419.2 723.0,511.8 629.5,534.6" fill="#777877"/><polygon points="587.7,400.0 626.6,439.1 725.1,419.2 679.0,383.3" fill="#909192"/><g clip-path="url(#cubeclip)"><line x1="216.4" y1="26.0" x2="595.4" y2="397.2" stroke="#b04a5a" stroke-width="1.7"/><line x1="677.4" y1="477.5" x2="1094.5" y2="886.0" stroke="#b04a5a" stroke-width="1.7"/><line x1="0.0" y1="595.0" x2="607.4" y2="466.0" stroke="#7fa23a" stroke-width="1.7"/><line x1="725.4" y1="440.9" x2="1311.0" y2="316.6" stroke="#7fa23a" stroke-width="1.7"/></g><g stroke="#545454" stroke-opacity="0.25" stroke-width="1"><line x1="412.0" y1="417.5" x2="735.8" y2="360.3"/><line x1="421.2" y1="435.2" x2="587.0" y2="404.6"/><line x1="683.9" y1="386.7" x2="755.9" y2="373.4"/><line x1="431.3" y1="454.4" x2="587.5" y2="424.2"/><line x1="703.4" y1="401.9" x2="777.5" y2="387.6"/><line x1="442.2" y1="475.4" x2="588.1" y2="445.9"/><line x1="724.5" y1="418.3" x2="800.9" y2="402.9"/><line x1="467.6" y1="524.0" x2="626.1" y2="488.6"/><line x1="725.8" y1="466.2" x2="853.9" y2="437.6"/><line x1="482.3" y1="552.3" x2="884.1" y2="457.3"/><line x1="498.8" y1="584.0" x2="917.1" y2="478.9"/><line x1="517.4" y1="619.5" x2="953.6" y2="502.8"/><line x1="412.0" y1="417.5" x2="517.4" y2="619.5"/><line x1="457.6" y1="409.5" x2="582.0" y2="602.2"/><line x1="501.5" y1="401.7" x2="643.3" y2="585.8"/><line x1="544.0" y1="394.2" x2="589.2" y2="444.8"/><line x1="628.9" y1="489.0" x2="701.6" y2="570.2"/><line x1="624.5" y1="379.9" x2="636.5" y2="390.3"/><line x1="725.0" y1="467.5" x2="809.6" y2="541.3"/><line x1="662.8" y1="373.2" x2="675.6" y2="383.2"/><line x1="725.6" y1="422.5" x2="859.8" y2="527.8"/><line x1="699.9" y1="366.6" x2="907.8" y2="515.0"/><line x1="735.8" y1="360.3" x2="953.6" y2="502.8"/></g><path d="M301.6,407.5L391.2,420.4L383.3,480.6L294.4,466ZM233,438.4L301.6,407.5M233,438.4L391.2,420.4M233,438.4L383.3,480.6M233,438.4L294.4,466" fill="none" stroke="#000" stroke-width="1"/><polygon points="350.5,372.2 316.1,404.2 377.8,412.5" fill="#000"/><line x1="840.4" y1="180.2" x2="812.4" y2="543" stroke="#2c2c2c" stroke-width="0.8"/><circle cx="840.4" cy="172.7" r="7.3" fill="none" stroke="#1a1a1a" stroke-width="1.2"/><circle cx="840.4" cy="172.7" r="11.8" fill="none" stroke="#1a1a1a" stroke-width="1.3" stroke-dasharray="2.8,2.6"/><path d="M840.4,169.7L842.4,172.7L840.4,175.7L838.4,172.7Z" fill="none" stroke="#111" stroke-width="0.8"/><circle cx="655.5" cy="456" r="10.1" fill="none" stroke="#fff" stroke-width="1.2"/><circle cx="655.5" cy="456" r="10.1" fill="none" stroke="#ff0000" stroke-width="1.2" stroke-dasharray="3.2,3.15"/><path d="M655.5,438V450.6M655.5,461.3V474M637,459.5L650.8,457.4M660.3,454.5L674,452.5M647.5,448L663.8,463.5" stroke="#000" stroke-width="1.3"/><circle cx="655.5" cy="456" r="2.6" fill="#f5a030" stroke="#222" stroke-width="0.7"/><rect x="0" y="26" width="1311" height="26.5" fill="#303030" fill-opacity="0.62"/><rect x="0" y="51.5" width="1311" height="1" fill="#2a2a2a" fill-opacity="0.5"/><rect x="9" y="29" width="30" height="18" rx="4" fill="#282828" stroke="#363636" stroke-width="0.8"/><g stroke="#dcdcdc" stroke-width="1.1" fill="none"><path d="M13.5,39.5H20.5M13.5,43.2H25.5M16.8,36.5L15.5,46M22.5,39.5L22.2,46"/></g><circle cx="23.8" cy="33.8" r="3.7" fill="#dcdcdc"/><path d="M21.8,33.5A2,2 0 0 1 23.5,31.6" fill="none" stroke="#777" stroke-width="0.9"/><path d="M29.6,36.8L33.0,40.2L36.5,36.8" fill="none" stroke="#cfcfcf" stroke-width="1.25" stroke-linecap="round" stroke-linejoin="round"/><rect x="46.5" y="29" width="107.5" height="18" rx="4" fill="#282828" stroke="#363636" stroke-width="0.8"/><g stroke="#dcdcdc" stroke-width="1" fill="none"><path d="M51.5,34.5V32.5H53.5M61.5,32.5H63.5V34.5M63.5,42.5V44.5H61.5M53.5,44.5H51.5V42.5"/></g><rect x="53.5" y="34.5" width="8" height="8" fill="#dcdcdc"/><text x="71" y="42" font-size="11.5" fill="#e6e6e6">Object Mode</text><path d="M144.6,36.8L148.0,40.2L151.4,36.8" fill="none" stroke="#cfcfcf" stroke-width="1.25" stroke-linecap="round" stroke-linejoin="round"/><text x="167" y="42" font-size="11.5" fill="#e6e6e6">View</text><text x="207.4" y="42" font-size="11.5" fill="#e6e6e6">Select</text><text x="254" y="42" font-size="11.5" fill="#e6e6e6">Add</text><text x="290" y="42" font-size="11.5" fill="#e6e6e6">Object</text><rect x="530.5" y="29" width="77.5" height="18" rx="4" fill="#282828" stroke="#363636" stroke-width="0.8"/><g stroke="#dcdcdc" stroke-width="1.05" fill="none" stroke-linecap="round"><path d="M537.1,40.3V31.2M535,33.4L537.1,31.2L539.2,33.4M538.6,41.9H547.9M545.7,39.8L547.9,41.9L545.7,44M538.2,40.8L544.9,34.1M542.4,34.2H545V36.8"/><circle cx="537.1" cy="41.9" r="1.5"/></g><text x="555" y="42" font-size="11.5" fill="#e6e6e6">Global</text><path d="M598.5,36.8L602.0,40.2L605.5,36.8" fill="none" stroke="#cfcfcf" stroke-width="1.25" stroke-linecap="round" stroke-linejoin="round"/><rect x="615" y="29" width="30" height="18" rx="4" fill="#282828" stroke="#363636" stroke-width="0.8"/><g stroke="#dcdcdc" stroke-width="1.1" fill="none"><path d="M625.2,32.4A4.3,4.3 0 1 1 630.6,39.2"/><path d="M626.6,43.9A4.3,4.3 0 1 1 621.2,37.1"/></g><circle cx="626.3" cy="37.6" r="1.2" fill="#dcdcdc"/><path d="M635.0,36.8L638.5,40.2L642.0,36.8" fill="none" stroke="#cfcfcf" stroke-width="1.25" stroke-linecap="round" stroke-linejoin="round"/><rect x="652" y="29" width="50" height="18" rx="4" fill="#282828" stroke="#363636" stroke-width="0.8"/><path d="M656,29H670.5V47H656a4,4 0 0 1 -4,-4V33a4,4 0 0 1 4,-4Z" fill="#545454"/><path d="M-6,-6V0A6,6 0 0 0 6,0V-6H2.5V0A2.5,2.5 0 0 1 -2.5,0V-6Z" transform="translate(661.5,38.5) rotate(-45) scale(0.88)" fill="none" stroke="#a8a8a8" stroke-width="1.1" stroke-linejoin="miter"/><g stroke="#dcdcdc" stroke-width="1.1" fill="none"><path d="M674.6,37V43.8M686.4,37V43.8M680.5,37.5V43.5M677.5,39.3V42.3M683.4,39.3V42.3M674.6,40.8H686.4"/></g><rect x="684" y="31" width="3.8" height="3.8" fill="#f0f0f0"/><path d="M692.5,36.8L696.0,40.2L699.5,36.8" fill="none" stroke="#cfcfcf" stroke-width="1.25" stroke-linecap="round" stroke-linejoin="round"/><rect x="709" y="29" width="50" height="18" rx="4" fill="#282828" stroke="#363636" stroke-width="0.8"/><path d="M713,29H727.5V47H713a4,4 0 0 1 -4,-4V33a4,4 0 0 1 4,-4Z" fill="#545454"/><circle cx="717.9" cy="37.8" r="6.6" fill="none" stroke="#7a7a7a" stroke-width="0.9"/><circle cx="717.9" cy="37.8" r="2" fill="#c8c8c8"/><path d="M732.1,43.7C735,43.7 736,32.2 739,32.2C742,32.2 743,43.7 746,43.7" fill="none" stroke="#b0b0b0" stroke-width="1"/><path d="M750.9,37.5L753.0,39.5L755.1,37.5" fill="none" stroke="#6a6a6a" stroke-width="1.0" stroke-linecap="round" stroke-linejoin="round"/><rect x="1056" y="29" width="30" height="18" rx="4" fill="#282828" stroke="#363636" stroke-width="0.8"/><path d="M1058,37.2L1061.5,44.8L1062.6,41.6L1066.1,40.6Z" fill="#e0e0e0" stroke="#e0e0e0" stroke-width="0.8" stroke-linejoin="round"/><path d="M1060.7,34.3C1062.5,31.6 1064.5,30.8 1066.3,30.8C1068.1,30.8 1070.1,31.6 1071.9,34.3C1070.1,37 1068.1,37.8 1066.3,37.8C1064.5,37.8 1062.5,37 1060.7,34.3Z" fill="#e0e0e0"/><circle cx="1066.3" cy="34.3" r="2.1" fill="#282828"/><circle cx="1066.3" cy="34.3" r="1.1" fill="#e0e0e0"/><path d="M1077.0,36.8L1080.5,40.2L1084.0,36.8" fill="none" stroke="#cfcfcf" stroke-width="1.25" stroke-linecap="round" stroke-linejoin="round"/><rect x="1093" y="29" width="38" height="18" rx="4" fill="#282828" stroke="#363636" stroke-width="0.8"/><path d="M1097,29H1111V47H1097a4,4 0 0 1 -4,-4V33a4,4 0 0 1 4,-4Z" fill="#4772b3"/><g stroke="#f0f0f0" stroke-width="1.1" fill="none"><path d="M1095,33.5C1100.5,33.5 1106.5,38 1106.5,44.7"/><circle cx="1096.9" cy="42.6" r="1.7"/><path d="M1098.2,41.3L1101.7,38.3M1103,37L1108.6,31.4M1104.6,31.3H1108.8V35.5"/></g><path d="M1117.8,36.8L1121.2,40.2L1124.7,36.8" fill="none" stroke="#cfcfcf" stroke-width="1.25" stroke-linecap="round" stroke-linejoin="round"/><rect x="1138" y="29" width="38" height="18" rx="4" fill="#282828" stroke="#363636" stroke-width="0.8"/><path d="M1142,29H1156V47H1142a4,4 0 0 1 -4,-4V33a4,4 0 0 1 4,-4Z" fill="#4772b3"/><path d="M1141.2,36.2A5,5 0 1 0 1149.2,43.2" fill="none" stroke="#f0f0f0" stroke-width="1.2"/><circle cx="1149.1" cy="35.9" r="5.6" fill="#4772b3"/><circle cx="1149.1" cy="35.9" r="4.9" fill="#f0f0f0"/><path d="M1146.5,37.5L1147.8,38.8" stroke="#4772b3" stroke-width="0.9"/><path d="M1162.5,36.8L1166.0,40.2L1169.5,36.8" fill="none" stroke="#cfcfcf" stroke-width="1.25" stroke-linecap="round" stroke-linejoin="round"/><rect x="1183" y="29" width="18" height="18" rx="4" fill="#545454"/><g fill="none" stroke="#e0e0e0" stroke-width="1.1"><rect x="1185.6" y="34.4" width="10.3" height="10.3"/><path d="M1189.2,33.4V31.3H1198.6V40.7H1196.8"/><path d="M1189.2,36.3V38.8M1190.6,40.6H1192.8" stroke-width="1"/></g><rect x="1208" y="29" width="95" height="18" rx="4" fill="#282828" stroke="#363636" stroke-width="0.8"/><path d="M1212,29H1283.5V47H1212a4,4 0 0 1 -4,-4V33a4,4 0 0 1 4,-4Z" fill="#545454"/><rect x="1227" y="29" width="18" height="18" fill="#4772b3"/><path d="M1226.3,29V47M1245.6,29V47M1264.4,29V47M1283.3,29V47" stroke="#3d3d3d" stroke-width="1"/><g fill="none" stroke="#d6d6d6" stroke-width="1"><circle cx="1217.1" cy="37.8" r="6.8"/><path d="M1210.3,37.8H1223.9M1215.9,31V44.6"/></g><circle cx="1236" cy="37.8" r="6.9" fill="#ffffff"/><path d="M1255,31A6.8,6.8 0 0 0 1250.2,42.6L1255,37.8Z" fill="#c8c8c8"/><circle cx="1255" cy="37.8" r="6.8" fill="none" stroke="#d6d6d6" stroke-width="1"/><path d="M1255,31V37.8L1250.2,42.6" fill="none" stroke="#d6d6d6" stroke-width="1"/><path d="M1256.5,41L1258,42.5M1258.3,39.6L1260,41.2" stroke="#b0b0b0" stroke-width="0.8"/><circle cx="1274.1" cy="37.8" r="6.8" fill="none" stroke="#d6d6d6" stroke-width="1"/><path d="M1270.6,35.6A4.2,4.2 0 0 1 1273,33.4" fill="none" stroke="#d0d0d0" stroke-width="1.5" stroke-linecap="round"/><path d="M1275.5,42.2L1276.5,43.2M1277.5,40.8L1278.7,42M1279,38.8L1280.2,40" stroke="#a0a0a0" stroke-width="0.8"/><path d="M1289.8,36.8L1293.2,40.2L1296.7,36.8" fill="none" stroke="#cfcfcf" stroke-width="1.25" stroke-linecap="round" stroke-linejoin="round"/><path d="M0,51H111V71a5,5 0 0 1 -5,5H0Z" fill="#303030" fill-opacity="0.55"/><path d="M1231,51H1311V77H1236a5,5 0 0 1 -5,-5Z" fill="#303030" fill-opacity="0.55"/><path d="M12,55H26V73H12a4,4 0 0 1 -4,-4V59a4,4 0 0 1 4,-4Z" fill="#4772b3"/><rect x="27" y="55" width="18" height="18" fill="#545454"/><rect x="46" y="55" width="18" height="18" fill="#545454"/><rect x="65" y="55" width="18" height="18" fill="#545454"/><path d="M84,55H98a4,4 0 0 1 4,4V69a4,4 0 0 1 -4,4H84Z" fill="#545454"/><rect x="10.5" y="57.5" width="13.5" height="13.5" fill="none" stroke="#ffffff" stroke-width="1.3" stroke-dasharray="2.2,1.7"/><path d="M28.8,71V61.5H32.9V57H43.1V67.3H38.6V71Z" fill="#cfcfcf"/><path d="M48.6,62.1H52.3M48.6,62.1V70.4H57.4V67.6" fill="none" stroke="#cfcfcf" stroke-width="1.1" stroke-dasharray="1.8,1.4"/><path d="M52.6,57H62V67.3H58V61.5H52.6Z" fill="#cfcfcf"/><path d="M67,61.5H71V57H81V67.3H77.3V71H67ZM71,61.5V67.3H77.3V61.5Z" fill="#cfcfcf" fill-rule="evenodd"/><rect x="86.4" y="57.5" width="13.5" height="13.5" fill="none" stroke="#cfcfcf" stroke-width="1.1" stroke-dasharray="1.8,1.6"/><rect x="90" y="61.1" width="6.3" height="5.9" fill="#cfcfcf"/><rect x="1240.5" y="55" width="64" height="18" rx="4" fill="#282828" stroke="#363636" stroke-width="0.8"/><text x="1247" y="68" font-size="11.5" fill="#e6e6e6">Options</text><path d="M1294.5,63.3L1298.0,66.7L1301.5,63.3" fill="none" stroke="#cfcfcf" stroke-width="1.25" stroke-linecap="round" stroke-linejoin="round"/><text x="64" y="97" font-size="11.5" fill="#ffffff" style="paint-order:stroke" stroke="#000" stroke-opacity="0.35" stroke-width="2">User Perspective</text><text x="64" y="115" font-size="11.5" fill="#ffffff" style="paint-order:stroke" stroke="#000" stroke-opacity="0.35" stroke-width="2">(1) Collection</text><rect x="139.3" y="106.5" width="1.3" height="11" fill="#ffffff"/><text x="145.4" y="115" font-size="11.5" fill="#ffffff" style="paint-order:stroke" stroke="#000" stroke-opacity="0.35" stroke-width="2">Cube</text><path d="M12,86H42a4,4 0 0 1 4,4V119H8V90a4,4 0 0 1 4,-4Z" fill="#4772b3"/><rect x="16.5" y="91.5" width="21.5" height="21.5" fill="none" stroke="#f5a623" stroke-width="1.4" stroke-dasharray="3,2.2"/><path d="M24,97.5V107L26.3,104.8L28,108.3L29.6,107.5L28,104H31.3Z" fill="#dedede"/><path d="M44,116.5L41.5,116.5L44,114Z" fill="#9ab"/><path d="M8,119H46V150a4,4 0 0 1 -4,4H12a4,4 0 0 1 -4,-4Z" fill="#282828"/><circle cx="27" cy="136.5" r="10.5" fill="none" stroke="#ffffff" stroke-width="1.4"/><circle cx="27" cy="136.5" r="10.5" fill="none" stroke="#b23030" stroke-width="1.4" stroke-dasharray="3.3,4.9" stroke-dashoffset="1.5"/><path d="M27,129V134M27,139V144M19.5,136.5H24.5M29.5,136.5H34.5" stroke="#9a9a9a" stroke-width="1.4"/><path d="M12,161H42a4,4 0 0 1 4,4V194.5a0,0 0 0 1 -0,0H8a0,0 0 0 1 -0,-0V165a4,4 0 0 1 4,-4Z" fill="#282828"/><path d="M8,194.5H46a0,0 0 0 1 0,0V229.5a0,0 0 0 1 -0,0H8a0,0 0 0 1 -0,-0V194.5a0,0 0 0 1 0,-0Z" fill="#282828"/><line x1="8" y1="194.5" x2="46" y2="194.5" stroke="#3a3a3a" stroke-width="1"/><path d="M8,229.5H46a0,0 0 0 1 0,0V264.5a0,0 0 0 1 -0,0H8a0,0 0 0 1 -0,-0V229.5a0,0 0 0 1 0,-0Z" fill="#282828"/><line x1="8" y1="229.5" x2="46" y2="229.5" stroke="#3a3a3a" stroke-width="1"/><path d="M8,264.5H46a0,0 0 0 1 0,0V295a4,4 0 0 1 -4,4H12a4,4 0 0 1 -4,-4V264.5a0,0 0 0 1 0,-0Z" fill="#282828"/><line x1="8" y1="264.5" x2="46" y2="264.5" stroke="#3a3a3a" stroke-width="1"/><g fill="#dcdcdc"><path d="M27,165.5L23.5,170H30.5Z"/><path d="M27,190L23.5,185.5H30.5Z"/><path d="M15,177.8L19.5,174.3V181.3Z"/><path d="M39,177.8L34.5,174.3V181.3Z"/></g><path d="M27,171V174M27,181.5V184.5M20.5,177.8H23.5M30.5,177.8H33.5" stroke="#dcdcdc" stroke-width="1.5"/><g fill="none" stroke="#dcdcdc" stroke-width="1.2"><path d="M19.5,209A8,8 0 0 1 34,206.5"/><path d="M34.5,216A8,8 0 0 1 20,218.5"/></g><g fill="#dcdcdc"><path d="M31,212L37,212L34,207Z"/><path d="M17,212L23,212L20,217Z"/><path d="M27,208.5L30.5,212L27,215.5L23.5,212Z" fill="#aaa"/></g><rect x="18.5" y="249.5" width="9" height="9" fill="#dcdcdc"/><path d="M21.5,247.5V240.5H36.5V255.5H29.5" fill="none" stroke="#dcdcdc" stroke-width="1.1"/><path d="M29,250L35,244M31.5,243.5H35.5V247.5" fill="none" stroke="#dcdcdc" stroke-width="1.2"/><path d="M44,296.5L41.5,296.5L44,294Z" fill="#777"/><path d="M44,261.5L41.5,261.5L44,259Z" fill="#777"/><circle cx="26.9" cy="281.3" r="9.8" fill="none" stroke="#dcdcdc" stroke-width="1.1" stroke-dasharray="9.4,6" stroke-dashoffset="12.4"/><rect x="23.2" y="277.6" width="7.4" height="7.4" fill="#dcdcdc"/><g fill="#dcdcdc"><path d="M26.9,271.8L24.3,275.3H29.5Z"/><path d="M26.9,290.8L24.3,287.3H29.5Z"/><path d="M17.4,281.3L20.9,278.7V283.9Z"/><path d="M36.4,281.3L32.9,278.7V283.9Z"/></g><path d="M12,305.5H42a4,4 0 0 1 4,4V339.5H8V309.5a4,4 0 0 1 4,-4Z" fill="#282828"/><path d="M8,339.5H46V370.5a4,4 0 0 1 -4,4H12a4,4 0 0 1 -4,-4Z" fill="#282828"/><line x1="8" y1="339.5" x2="46" y2="339.5" stroke="#3a3a3a"/><path d="M18,325L32,311.5L35,314.5L21,328L17,329Z" fill="#dcdcdc"/><path d="M15,332C20,327 24,336 29,333S36,328 39,330" fill="none" stroke="#7fd6a6" stroke-width="1.3"/><path d="M44,336.5L41.5,336.5L44,334Z" fill="#777"/><path d="M18.5,345V368H37V366H20.5V345Z" fill="#dcdcdc"/><path d="M20.5,353A13,13 0 0 1 34,366H20.5Z" fill="#7fd6a6"/><path d="M22,366V368M25,366V368M28,366V368M31,366V368M34,366V368M18.5,349H20.5M18.5,352H20.5M18.5,355H20.5M18.5,358H20.5" stroke="#282828" stroke-width="0.8"/><rect x="8" y="381" width="38" height="33" rx="4" fill="#282828"/><g fill="none" stroke="#7fd6a6" stroke-width="1.2"><path d="M20,393.5H33.5V407.5H20ZM20,393.5L24,389.5H37.5V403.5L33.5,407.5M33.5,393.5L37.5,389.5"/></g><path d="M18.5,383.5V390.5M15,387H22" stroke="#7fd6a6" stroke-width="1.6"/><path d="M44,411.5L41.5,411.5L44,409Z" fill="#777"/><circle cx="1247.6" cy="114" r="7.5" fill="#ff3352" fill-opacity="0.08" stroke="#c33348" stroke-width="1.2"/><circle cx="1231.8" cy="133.2" r="7.5" fill="#8bdc00" fill-opacity="0.3" stroke="#8bdc00" stroke-width="1.3"/><circle cx="1261.4" cy="155.3" r="7.5" fill="#2c8fff" fill-opacity="0.25" stroke="#3b7dd6" stroke-width="1.2"/><line x1="1260.8" y1="127" x2="1260.5" y2="98" stroke="#2c8fff" stroke-width="2"/><line x1="1260.8" y1="127" x2="1290.2" y2="121" stroke="#6ba82a" stroke-width="2"/><line x1="1260.8" y1="127" x2="1274.3" y2="140" stroke="#ff3352" stroke-width="2"/><circle cx="1260.5" cy="98" r="8" fill="#2c8fff"/><circle cx="1290.2" cy="121" r="8" fill="#6ba82a"/><circle cx="1274.3" cy="140" r="8" fill="#ff3352"/><text x="1260.5" y="102.2" font-size="11" fill="#0b1a33" text-anchor="middle" font-weight="bold">Z</text><text x="1290.4" y="125.2" font-size="11" fill="#15220a" text-anchor="middle" font-weight="bold">Y</text><text x="1274.3" y="144.2" font-size="11" fill="#380a12" text-anchor="middle" font-weight="bold">X</text><circle cx="1289" cy="181.7" r="13.8" fill="#2a2a2a" fill-opacity="0.8"/><circle cx="1289" cy="211.6" r="13.8" fill="#2a2a2a" fill-opacity="0.8"/><circle cx="1289" cy="241.8" r="13.8" fill="#2a2a2a" fill-opacity="0.8"/><circle cx="1289" cy="271.8" r="13.8" fill="#2a2a2a" fill-opacity="0.8"/><circle cx="1290.6" cy="181.1" r="6.6" fill="#dedede"/><path d="M1290.6,177.6V184.6M1287.1,181.1H1294.1" stroke="#2a2a2a" stroke-width="1.3"/><path d="M1281.8,188.6L1285.8,184.6" stroke="#dedede" stroke-width="2.4" stroke-linecap="round"/><path d="M1282.2,213.5C1283.5,212.8 1285,213.5 1286,215V206.5C1286,205 1288.2,205 1288.2,206.5V212V204.5C1288.2,203 1290.5,203 1290.5,204.5V212V205C1290.5,203.5 1292.8,203.5 1292.8,205V212.5V207C1292.8,205.5 1295,205.5 1295,207V214C1295,218.5 1293,220.5 1289.5,220.5C1286.5,220.5 1285,219 1283.5,216.5Z" fill="#dedede"/><path d="M1288.2,205.5V212.5M1290.5,204.5V212.5M1292.8,205.5V213M1286,215.5L1287.2,217" stroke="#2a2a2a" stroke-width="0.7"/><circle cx="1284.4" cy="239.3" r="3.4" fill="#dedede"/><circle cx="1291.2" cy="238.2" r="4.5" fill="#dedede"/><rect x="1285.4" y="244" width="8.6" height="6" fill="#dedede"/><path d="M1293.5,247L1297,244.5V250.5L1293.5,248Z" fill="#dedede"/><rect x="1282.8" y="245.4" width="2.6" height="2.8" fill="#dedede"/><circle cx="1284.4" cy="239.3" r="0.9" fill="#2a2a2a"/><circle cx="1291.2" cy="238.2" r="1" fill="#2a2a2a"/><g fill="none" stroke="#dedede" stroke-width="1.3"><path d="M1281.2,278.6H1296.8L1293.8,266.6H1284.2Z"/><path d="M1283.2,270.6H1294.8M1282.2,274.6H1295.8M1287.5,266.6L1286.5,278.6M1290.5,266.6L1291.5,278.6"/></g><rect x="1302" y="89" width="9" height="17" rx="3" fill="#2a2a2a" fill-opacity="0.5"/><path d="M1309,94.5L1306,97.5L1309,100.5" fill="none" stroke="#aaa" stroke-width="1"/></g><defs><clipPath id="olclip"><rect x="1314" y="26" width="273" height="302" rx="5"/></clipPath></defs><g clip-path="url(#olclip)"><rect x="1314" y="26" width="273" height="302" fill="#282828"/><rect x="1314" y="72" width="273" height="20" fill="#2b2b2b"/><rect x="1314" y="112" width="273" height="20" fill="#2b2b2b"/><rect x="1314" y="152" width="273" height="20" fill="#2b2b2b"/><rect x="1314" y="192" width="273" height="20" fill="#2b2b2b"/><rect x="1314" y="232" width="273" height="20" fill="#2b2b2b"/><rect x="1314" y="272" width="273" height="20" fill="#2b2b2b"/><rect x="1314" y="312" width="273" height="20" fill="#2b2b2b"/><rect x="1322.5" y="28.5" width="31.5" height="19" rx="4" fill="#282828" stroke="#3a3a3a" stroke-width="0.8"/><g fill="#e0e0e0"><rect x="1327.5" y="31.5" width="5" height="3"/><rect x="1333.5" y="37" width="7" height="3"/><rect x="1333.5" y="42" width="7" height="3"/></g><path d="M1329,35V43.5H1333.5M1329,38.5H1333.5" stroke="#e0e0e0" stroke-width="1" fill="none"/><path d="M1344.0,36.8L1347.5,40.2L1351.0,36.8" fill="none" stroke="#d0d0d0" stroke-width="1.25" stroke-linecap="round" stroke-linejoin="round"/><rect x="1359.5" y="28.5" width="31.5" height="19" rx="4" fill="#282828" stroke="#3a3a3a" stroke-width="0.8"/><g fill="none" stroke="#e0e0e0" stroke-width="1"><rect x="1367.5" y="31.5" width="8" height="8"/><path d="M1365.5,33.5V41.5H1373.5M1363.5,35.5V43.5H1371.5"/></g><path d="M1368.5,38.5L1371,35L1372.5,37L1374,34.5L1375,38.5Z" fill="#e0e0e0"/><path d="M1381.0,36.8L1384.5,40.2L1388.0,36.8" fill="none" stroke="#d0d0d0" stroke-width="1.25" stroke-linecap="round" stroke-linejoin="round"/><rect x="1407.5" y="28.5" width="114.5" height="19" rx="4" fill="#1d1d1d" stroke="#2e2e2e" stroke-width="0.8"/><circle cx="1419.5" cy="36" r="4" fill="none" stroke="#e0e0e0" stroke-width="1.2"/><path d="M1416.5,39L1412.5,43" stroke="#e0e0e0" stroke-width="1.3"/><rect x="1538.5" y="28.5" width="31.5" height="19" rx="4" fill="#282828" stroke="#3a3a3a" stroke-width="0.8"/><path d="M1542.5,32H1552.5L1548.5,38V44.5L1546.5,42.5V38Z" fill="none" stroke="#e0e0e0" stroke-width="1.1"/><path d="M1560.0,36.8L1563.5,40.2L1567.0,36.8" fill="none" stroke="#d0d0d0" stroke-width="1.25" stroke-linecap="round" stroke-linejoin="round"/><rect x="1575.5" y="28.5" width="20" height="19" rx="4" fill="#3d3d3d"/><path d="M1580,33H1587M1580,33V44H1587M1583,38H1587" stroke="#cfcfcf" stroke-width="1.2" fill="none"/><rect x="1337.5" y="56.5" width="14" height="3.5" fill="#e0e0e0"/><rect x="1338.5" y="61.0" width="12" height="8.5" fill="#e0e0e0"/><rect x="1342.5" y="62.5" width="4" height="1.5" fill="#282828"/><text x="1358.5" y="67" font-size="11.5" fill="#e0e0e0">Scene Collection</text><path d="M1340.5,79.5H1347L1343.75,85.5Z" fill="#c8c8c8"/><rect x="1354.5" y="73.5" width="19" height="17.5" rx="4" fill="#555555" stroke="#6a6a6a" stroke-width="0.6"/><rect x="1357" y="76" width="14" height="3.5" fill="#e0e0e0"/><rect x="1358" y="80.5" width="12" height="8.5" fill="#e0e0e0"/><rect x="1362" y="82" width="4" height="1.5" fill="#555555"/><text x="1378" y="87" font-size="11.5" fill="#e0e0e0">Collection</text><rect x="1521.5" y="76.5" width="11" height="11" rx="1.5" fill="#e6e6e6"/><path d="M1523.8,82L1526.3,84.5L1530.3,79" fill="none" stroke="#282828" stroke-width="1.6"/><line x1="1343.5" y1="97" x2="1343.5" y2="147.5" stroke="#5a5a5a" stroke-width="1"/><path d="M1361,98.7L1367,102L1361,105.3Z" fill="#c8c8c8"/><text x="1398.3" y="107" font-size="11.5" fill="#e0e0e0">Camera</text><path d="M1361,118.7L1367,122L1361,125.3Z" fill="#c8c8c8"/><text x="1398.3" y="127" font-size="11.5" fill="#e0e0e0">Cube</text><path d="M1361,138.7L1367,142L1361,145.3Z" fill="#c8c8c8"/><text x="1398.3" y="147" font-size="11.5" fill="#e0e0e0">Light</text><path d="M1539.5,82C1542.0,77.5 1551.0,77.5 1553.5,82C1551.0,86.5 1542.0,86.5 1539.5,82Z" fill="none" stroke="#e0e0e0" stroke-width="1.4"/><circle cx="1546.5" cy="82" r="2.3" fill="#e0e0e0"/><path d="M1559.5,78.5H1563.0L1564.5,76.5H1568.5L1570.0,78.5H1573.5V87H1559.5Z" fill="#e0e0e0"/><circle cx="1566.5" cy="82.5" r="3.3" fill="#282828"/><circle cx="1566.5" cy="82.5" r="1.8" fill="#e0e0e0"/><path d="M1539.5,102C1542.0,97.5 1551.0,97.5 1553.5,102C1551.0,106.5 1542.0,106.5 1539.5,102Z" fill="none" stroke="#e0e0e0" stroke-width="1.4"/><circle cx="1546.5" cy="102" r="2.3" fill="#e0e0e0"/><path d="M1559.5,98.5H1563.0L1564.5,96.5H1568.5L1570.0,98.5H1573.5V107H1559.5Z" fill="#e0e0e0"/><circle cx="1566.5" cy="102.5" r="3.3" fill="#282828"/><circle cx="1566.5" cy="102.5" r="1.8" fill="#e0e0e0"/><path d="M1539.5,122C1542.0,117.5 1551.0,117.5 1553.5,122C1551.0,126.5 1542.0,126.5 1539.5,122Z" fill="none" stroke="#e0e0e0" stroke-width="1.4"/><circle cx="1546.5" cy="122" r="2.3" fill="#e0e0e0"/><path d="M1559.5,118.5H1563.0L1564.5,116.5H1568.5L1570.0,118.5H1573.5V127H1559.5Z" fill="#e0e0e0"/><circle cx="1566.5" cy="122.5" r="3.3" fill="#282828"/><circle cx="1566.5" cy="122.5" r="1.8" fill="#e0e0e0"/><path d="M1539.5,142C1542.0,137.5 1551.0,137.5 1553.5,142C1551.0,146.5 1542.0,146.5 1539.5,142Z" fill="none" stroke="#e0e0e0" stroke-width="1.4"/><circle cx="1546.5" cy="142" r="2.3" fill="#e0e0e0"/><path d="M1559.5,138.5H1563.0L1564.5,136.5H1568.5L1570.0,138.5H1573.5V147H1559.5Z" fill="#e0e0e0"/><circle cx="1566.5" cy="142.5" r="3.3" fill="#282828"/><circle cx="1566.5" cy="142.5" r="1.8" fill="#e0e0e0"/><g fill="#d9853f"><circle cx="1380.5" cy="98.5" r="3.3"/><circle cx="1387" cy="98" r="3.8"/><rect x="1378" y="101.5" width="11" height="6.5"/><path d="M1389,104.5L1392,101.5V108L1389,105Z"/></g><circle cx="1380.5" cy="98.5" r="1" fill="#282828"/><circle cx="1387" cy="98" r="1.2" fill="#282828"/><rect x="1458.5" y="93.5" width="19" height="17.5" rx="4" fill="#555555" stroke="#6a6a6a" stroke-width="0.6"/><g fill="none" stroke="#2fc5a0" stroke-width="1.1"><path d="M1462.5,101.5C1461,98 1465,96 1467,98.5C1468,95.5 1474,95.5 1473.5,99.5C1473.5,101.5 1471,102 1470,102H1463Z"/><rect x="1463.5" y="104" width="8.5" height="4.5"/><path d="M1472,105.5L1474.5,104V108.5L1472,107"/></g><rect x="1374.5" y="113.5" width="19" height="17.5" rx="4" fill="#555555" stroke="#6a6a6a" stroke-width="0.6"/><path d="M1377.5,116H1390.5L1384,129Z" fill="#d9853f"/><path d="M1380.5,118.5H1387.5L1384,125.5Z" fill="#555555"/><g fill="none" stroke="#2fc5a0" stroke-width="1.1"><path d="M1448.5,116.5H1461.5L1455,128.5Z"/></g><g fill="#282828" stroke="#2fc5a0" stroke-width="1"><rect x="1447" y="115" width="3" height="3"/><rect x="1460" y="115" width="3" height="3"/><rect x="1453.5" y="126.5" width="3" height="3"/></g><circle cx="1384" cy="139" r="5.5" fill="#d9853f"/><rect x="1381" y="144" width="6" height="1.3" fill="#d9853f"/><rect x="1381.5" y="146" width="5" height="1.3" fill="#d9853f"/><rect x="1382.5" y="148" width="3" height="1" fill="#d9853f"/><path d="M1381.5,137.5L1382.3,141H1385.7L1386.5,137.5M1382.3,139H1385.7" fill="none" stroke="#282828" stroke-width="0.8"/><circle cx="1454.6" cy="141" r="5.8" fill="none" stroke="#2fc5a0" stroke-width="1.1"/><circle cx="1454.6" cy="140" r="1.3" fill="none" stroke="#2fc5a0" stroke-width="0.9"/><path d="M1454.6,141.5V144M1454.6,145.5V148" stroke="#2fc5a0" stroke-width="0.9"/></g><defs><clipPath id="prclip"><rect x="1314" y="331" width="271" height="623" rx="5"/></clipPath></defs><g clip-path="url(#prclip)"><rect x="1314" y="331" width="273" height="623" fill="#303030"/><rect x="1314" y="356" width="28" height="600" fill="#1d1d1d"/><rect x="1322.5" y="333.5" width="31" height="19" rx="4" fill="#282828" stroke="#3a3a3a" stroke-width="0.8"/><g fill="#e6e6e6"><rect x="1326.5" y="336.5" width="14" height="6" rx="3"/><rect x="1326.5" y="344" width="14" height="6" rx="3"/></g><rect x="1334" y="338" width="5" height="3" rx="1.5" fill="#282828"/><rect x="1335.5" y="345.5" width="3.5" height="3" rx="1.5" fill="#282828"/><path d="M1343.5,341.3L1347.0,344.7L1350.5,341.3" fill="none" stroke="#d0d0d0" stroke-width="1.25" stroke-linecap="round" stroke-linejoin="round"/><rect x="1389.5" y="333.5" width="114" height="19" rx="4" fill="#1d1d1d" stroke="#2e2e2e" stroke-width="0.8"/><circle cx="1401.5" cy="341" r="4" fill="none" stroke="#e0e0e0" stroke-width="1.2"/><path d="M1398.5,344L1394.5,348" stroke="#e0e0e0" stroke-width="1.3"/><rect x="1559.5" y="333.5" width="19" height="19" rx="4" fill="#282828" stroke="#3a3a3a" stroke-width="0.8"/><path d="M1565.5,341.3L1569.0,344.7L1572.5,341.3" fill="none" stroke="#d0d0d0" stroke-width="1.25" stroke-linecap="round" stroke-linejoin="round"/><g stroke="#dcdcdc" stroke-width="1" fill="none"><path d="M1353.5,368V366H1355.5M1363.5,366H1365.5V368M1365.5,376V378H1363.5M1355.5,378H1353.5V376"/></g><rect x="1355.5" y="368" width="8" height="8" fill="#dcdcdc"/><text x="1376.3" y="378" font-size="11.5" fill="#e6e6e6">Cube</text><path d="M1563,380L1567.5,375.5M1566,372.5L1572,378.5M1567.5,371.3L1573.2,377M1569,373.5L1572.5,370M1570.5,376.5L1574.5,372.5M1571,369L1576,374" stroke="#9a9a9a" stroke-width="1" fill="none"/><rect x="1350.5" y="400.5" width="228" height="19" rx="4" fill="#1d1d1d" stroke="#2a2a2a" stroke-width="0.8"/><path d="M1354.5,400.5H1381.5V419.5H1354.5a4,4 0 0 1 -4,-4V404.5a4,4 0 0 1 4,-4Z" fill="#282828"/><line x1="1381.5" y1="401" x2="1381.5" y2="419" stroke="#3a3a3a"/><g stroke="#dcdcdc" stroke-width="1" fill="none"><path d="M1354.5,405V403H1356.5M1364.5,403H1366.5V405M1366.5,413V415H1364.5M1356.5,415H1354.5V413"/></g><rect x="1356.5" y="405" width="8" height="8" fill="#dcdcdc"/><path d="M1371.5,408.3L1375.0,411.7L1378.5,408.3" fill="none" stroke="#d0d0d0" stroke-width="1.25" stroke-linecap="round" stroke-linejoin="round"/><text x="1389.2" y="414.5" font-size="11.5" fill="#e6e6e6">Cube</text><rect x="1350" y="430" width="229" height="280" rx="5" fill="#3d3d3d"/><path d="M1359.2,440.4L1362.5,443.6L1365.8,440.4" fill="none" stroke="#d6d6d6" stroke-width="1.1" stroke-linecap="round" stroke-linejoin="round"/><text x="1372.5" y="447.5" font-size="11.5" fill="#e6e6e6">Transform</text><rect x="1561.5" y="441" width="1.4" height="1.4" fill="#8a8a8a"/><rect x="1561.5" y="444" width="1.4" height="1.4" fill="#8a8a8a"/><rect x="1564.5" y="441" width="1.4" height="1.4" fill="#8a8a8a"/><rect x="1564.5" y="444" width="1.4" height="1.4" fill="#8a8a8a"/><rect x="1567.5" y="441" width="1.4" height="1.4" fill="#8a8a8a"/><rect x="1567.5" y="444" width="1.4" height="1.4" fill="#8a8a8a"/><rect x="1570.5" y="441" width="1.4" height="1.4" fill="#8a8a8a"/><rect x="1570.5" y="444" width="1.4" height="1.4" fill="#8a8a8a"/><path d="M1445,463.5H1526a4,4 0 0 1 4,4V482.5a0,0 0 0 1 -0,0H1441a0,0 0 0 1 -0,-0V467.5a4,4 0 0 1 4,-4Z" fill="#545454"/><text x="1485.5" y="477.0" font-size="11.5" fill="#e6e6e6" text-anchor="middle">0 m</text><text x="1431" y="477.3" font-size="11.5" fill="#e6e6e6" text-anchor="end">Location X</text><path d="M1535.5,471.5V469.5a3,3 0 0 1 6,0" fill="none" stroke="#d0d0d0" stroke-width="1"/><rect x="1539.5" y="473.0" width="8" height="5.5" fill="none" stroke="#d0d0d0" stroke-width="1"/><rect x="1543" y="475.0" width="1" height="1.6" fill="#d0d0d0"/><circle cx="1561" cy="473.3" r="1.8" fill="#d8d8d8"/><path d="M1441,483.1H1530a0,0 0 0 1 0,0V502.1a0,0 0 0 1 -0,0H1441a0,0 0 0 1 -0,-0V483.1a0,0 0 0 1 0,-0Z" fill="#545454"/><text x="1485.5" y="496.6" font-size="11.5" fill="#e6e6e6" text-anchor="middle">0 m</text><text x="1431" y="496.90000000000003" font-size="11.5" fill="#e6e6e6" text-anchor="end">Y</text><path d="M1535.5,491.1V489.1a3,3 0 0 1 6,0" fill="none" stroke="#d0d0d0" stroke-width="1"/><rect x="1539.5" y="492.6" width="8" height="5.5" fill="none" stroke="#d0d0d0" stroke-width="1"/><rect x="1543" y="494.6" width="1" height="1.6" fill="#d0d0d0"/><circle cx="1561" cy="492.90000000000003" r="1.8" fill="#d8d8d8"/><path d="M1441,502.7H1530a0,0 0 0 1 0,0V517.7a4,4 0 0 1 -4,4H1445a4,4 0 0 1 -4,-4V502.7a0,0 0 0 1 0,-0Z" fill="#545454"/><text x="1485.5" y="516.2" font-size="11.5" fill="#e6e6e6" text-anchor="middle">0 m</text><text x="1431" y="516.5" font-size="11.5" fill="#e6e6e6" text-anchor="end">Z</text><path d="M1535.5,510.7V508.7a3,3 0 0 1 6,0" fill="none" stroke="#d0d0d0" stroke-width="1"/><rect x="1539.5" y="512.2" width="8" height="5.5" fill="none" stroke="#d0d0d0" stroke-width="1"/><rect x="1543" y="514.2" width="1" height="1.6" fill="#d0d0d0"/><circle cx="1561" cy="512.5" r="1.8" fill="#d8d8d8"/><path d="M1445,528.5H1526a4,4 0 0 1 4,4V547.5a0,0 0 0 1 -0,0H1441a0,0 0 0 1 -0,-0V532.5a4,4 0 0 1 4,-4Z" fill="#545454"/><text x="1485.5" y="542.0" font-size="11.5" fill="#e6e6e6" text-anchor="middle">0°</text><text x="1431" y="542.3" font-size="11.5" fill="#e6e6e6" text-anchor="end">Rotation X</text><path d="M1535.5,536.5V534.5a3,3 0 0 1 6,0" fill="none" stroke="#d0d0d0" stroke-width="1"/><rect x="1539.5" y="538.0" width="8" height="5.5" fill="none" stroke="#d0d0d0" stroke-width="1"/><rect x="1543" y="540.0" width="1" height="1.6" fill="#d0d0d0"/><circle cx="1561" cy="538.3" r="1.8" fill="#d8d8d8"/><path d="M1441,548.1H1530a0,0 0 0 1 0,0V567.1a0,0 0 0 1 -0,0H1441a0,0 0 0 1 -0,-0V548.1a0,0 0 0 1 0,-0Z" fill="#545454"/><text x="1485.5" y="561.6" font-size="11.5" fill="#e6e6e6" text-anchor="middle">0°</text><text x="1431" y="561.9" font-size="11.5" fill="#e6e6e6" text-anchor="end">Y</text><path d="M1535.5,556.1V554.1a3,3 0 0 1 6,0" fill="none" stroke="#d0d0d0" stroke-width="1"/><rect x="1539.5" y="557.6" width="8" height="5.5" fill="none" stroke="#d0d0d0" stroke-width="1"/><rect x="1543" y="559.6" width="1" height="1.6" fill="#d0d0d0"/><circle cx="1561" cy="557.9" r="1.8" fill="#d8d8d8"/><path d="M1441,567.7H1530a0,0 0 0 1 0,0V582.7a4,4 0 0 1 -4,4H1445a4,4 0 0 1 -4,-4V567.7a0,0 0 0 1 0,-0Z" fill="#545454"/><text x="1485.5" y="581.2" font-size="11.5" fill="#e6e6e6" text-anchor="middle">0°</text><text x="1431" y="581.5" font-size="11.5" fill="#e6e6e6" text-anchor="end">Z</text><path d="M1535.5,575.7V573.7a3,3 0 0 1 6,0" fill="none" stroke="#d0d0d0" stroke-width="1"/><rect x="1539.5" y="577.2" width="8" height="5.5" fill="none" stroke="#d0d0d0" stroke-width="1"/><rect x="1543" y="579.2" width="1" height="1.6" fill="#d0d0d0"/><circle cx="1561" cy="577.5" r="1.8" fill="#d8d8d8"/><path d="M1445,594H1526a4,4 0 0 1 4,4V608a4,4 0 0 1 -4,4H1445a4,4 0 0 1 -4,-4V598a4,4 0 0 1 4,-4Z" fill="#282828"/><text x="1447.5" y="607.0" font-size="11.5" fill="#e6e6e6">XYZ Euler</text><path d="M1519.5,601.8L1523.0,605.2L1526.5,601.8" fill="none" stroke="#d0d0d0" stroke-width="1.25" stroke-linecap="round" stroke-linejoin="round"/><text x="1431" y="607.5" font-size="11.5" fill="#e6e6e6" text-anchor="end">Mode</text><circle cx="1561" cy="603" r="1.8" fill="#d8d8d8"/><path d="M1445,618.5H1526a4,4 0 0 1 4,4V637.5a0,0 0 0 1 -0,0H1441a0,0 0 0 1 -0,-0V622.5a4,4 0 0 1 4,-4Z" fill="#545454"/><text x="1485.5" y="632.0" font-size="11.5" fill="#e6e6e6" text-anchor="middle">1.000</text><text x="1431" y="632.3" font-size="11.5" fill="#e6e6e6" text-anchor="end">Scale X</text><path d="M1535.5,626.5V624.5a3,3 0 0 1 6,0" fill="none" stroke="#d0d0d0" stroke-width="1"/><rect x="1539.5" y="628.0" width="8" height="5.5" fill="none" stroke="#d0d0d0" stroke-width="1"/><rect x="1543" y="630.0" width="1" height="1.6" fill="#d0d0d0"/><circle cx="1561" cy="628.3" r="1.8" fill="#d8d8d8"/><path d="M1441,638.1H1530a0,0 0 0 1 0,0V657.1a0,0 0 0 1 -0,0H1441a0,0 0 0 1 -0,-0V638.1a0,0 0 0 1 0,-0Z" fill="#545454"/><text x="1485.5" y="651.6" font-size="11.5" fill="#e6e6e6" text-anchor="middle">1.000</text><text x="1431" y="651.9" font-size="11.5" fill="#e6e6e6" text-anchor="end">Y</text><path d="M1535.5,646.1V644.1a3,3 0 0 1 6,0" fill="none" stroke="#d0d0d0" stroke-width="1"/><rect x="1539.5" y="647.6" width="8" height="5.5" fill="none" stroke="#d0d0d0" stroke-width="1"/><rect x="1543" y="649.6" width="1" height="1.6" fill="#d0d0d0"/><circle cx="1561" cy="647.9" r="1.8" fill="#d8d8d8"/><path d="M1441,657.7H1530a0,0 0 0 1 0,0V672.7a4,4 0 0 1 -4,4H1445a4,4 0 0 1 -4,-4V657.7a0,0 0 0 1 0,-0Z" fill="#545454"/><text x="1485.5" y="671.2" font-size="11.5" fill="#e6e6e6" text-anchor="middle">1.000</text><text x="1431" y="671.5" font-size="11.5" fill="#e6e6e6" text-anchor="end">Z</text><path d="M1535.5,665.7V663.7a3,3 0 0 1 6,0" fill="none" stroke="#d0d0d0" stroke-width="1"/><rect x="1539.5" y="667.2" width="8" height="5.5" fill="none" stroke="#d0d0d0" stroke-width="1"/><rect x="1543" y="669.2" width="1" height="1.6" fill="#d0d0d0"/><circle cx="1561" cy="667.5" r="1.8" fill="#d8d8d8"/><path d="M1376,694.5L1379.5,698.5L1376,702.5" fill="none" stroke="#d0d0d0" stroke-width="1.1"/><text x="1386" y="703" font-size="11.5" fill="#e6e6e6">Delta Transform</text><rect x="1350" y="713.5" width="229" height="24.5" rx="5" fill="#3d3d3d"/><path d="M1360,722.0L1364,726.0L1360,730.0" fill="none" stroke="#d0d0d0" stroke-width="1.1"/><text x="1372.3" y="730.0" font-size="11.5" fill="#e6e6e6">Relations</text><rect x="1561.5" y="724.0" width="1.4" height="1.4" fill="#8a8a8a"/><rect x="1561.5" y="727.0" width="1.4" height="1.4" fill="#8a8a8a"/><rect x="1564.5" y="724.0" width="1.4" height="1.4" fill="#8a8a8a"/><rect x="1564.5" y="727.0" width="1.4" height="1.4" fill="#8a8a8a"/><rect x="1567.5" y="724.0" width="1.4" height="1.4" fill="#8a8a8a"/><rect x="1567.5" y="727.0" width="1.4" height="1.4" fill="#8a8a8a"/><rect x="1570.5" y="724.0" width="1.4" height="1.4" fill="#8a8a8a"/><rect x="1570.5" y="727.0" width="1.4" height="1.4" fill="#8a8a8a"/><rect x="1350" y="740.5" width="229" height="24.5" rx="5" fill="#3d3d3d"/><path d="M1360,749.0L1364,753.0L1360,757.0" fill="none" stroke="#d0d0d0" stroke-width="1.1"/><text x="1372.3" y="757.0" font-size="11.5" fill="#e6e6e6">Collections</text><rect x="1561.5" y="751.0" width="1.4" height="1.4" fill="#8a8a8a"/><rect x="1561.5" y="754.0" width="1.4" height="1.4" fill="#8a8a8a"/><rect x="1564.5" y="751.0" width="1.4" height="1.4" fill="#8a8a8a"/><rect x="1564.5" y="754.0" width="1.4" height="1.4" fill="#8a8a8a"/><rect x="1567.5" y="751.0" width="1.4" height="1.4" fill="#8a8a8a"/><rect x="1567.5" y="754.0" width="1.4" height="1.4" fill="#8a8a8a"/><rect x="1570.5" y="751.0" width="1.4" height="1.4" fill="#8a8a8a"/><rect x="1570.5" y="754.0" width="1.4" height="1.4" fill="#8a8a8a"/><rect x="1350" y="767.5" width="229" height="24.5" rx="5" fill="#3d3d3d"/><path d="M1360,776.0L1364,780.0L1360,784.0" fill="none" stroke="#d0d0d0" stroke-width="1.1"/><text x="1372.3" y="784.0" font-size="11.5" fill="#e6e6e6">Instancing</text><rect x="1561.5" y="778.0" width="1.4" height="1.4" fill="#8a8a8a"/><rect x="1561.5" y="781.0" width="1.4" height="1.4" fill="#8a8a8a"/><rect x="1564.5" y="778.0" width="1.4" height="1.4" fill="#8a8a8a"/><rect x="1564.5" y="781.0" width="1.4" height="1.4" fill="#8a8a8a"/><rect x="1567.5" y="778.0" width="1.4" height="1.4" fill="#8a8a8a"/><rect x="1567.5" y="781.0" width="1.4" height="1.4" fill="#8a8a8a"/><rect x="1570.5" y="778.0" width="1.4" height="1.4" fill="#8a8a8a"/><rect x="1570.5" y="781.0" width="1.4" height="1.4" fill="#8a8a8a"/><rect x="1350" y="794.5" width="229" height="24.5" rx="5" fill="#3d3d3d"/><path d="M1360,803.0L1364,807.0L1360,811.0" fill="none" stroke="#d0d0d0" stroke-width="1.1"/><text x="1372.3" y="811.0" font-size="11.5" fill="#e6e6e6">Motion Paths</text><rect x="1561.5" y="805.0" width="1.4" height="1.4" fill="#8a8a8a"/><rect x="1561.5" y="808.0" width="1.4" height="1.4" fill="#8a8a8a"/><rect x="1564.5" y="805.0" width="1.4" height="1.4" fill="#8a8a8a"/><rect x="1564.5" y="808.0" width="1.4" height="1.4" fill="#8a8a8a"/><rect x="1567.5" y="805.0" width="1.4" height="1.4" fill="#8a8a8a"/><rect x="1567.5" y="808.0" width="1.4" height="1.4" fill="#8a8a8a"/><rect x="1570.5" y="805.0" width="1.4" height="1.4" fill="#8a8a8a"/><rect x="1570.5" y="808.0" width="1.4" height="1.4" fill="#8a8a8a"/><rect x="1350" y="821.5" width="229" height="24.5" rx="5" fill="#3d3d3d"/><path d="M1360,830.0L1364,834.0L1360,838.0" fill="none" stroke="#d0d0d0" stroke-width="1.1"/><text x="1372.3" y="838.0" font-size="11.5" fill="#e6e6e6">Visibility</text><rect x="1561.5" y="832.0" width="1.4" height="1.4" fill="#8a8a8a"/><rect x="1561.5" y="835.0" width="1.4" height="1.4" fill="#8a8a8a"/><rect x="1564.5" y="832.0" width="1.4" height="1.4" fill="#8a8a8a"/><rect x="1564.5" y="835.0" width="1.4" height="1.4" fill="#8a8a8a"/><rect x="1567.5" y="832.0" width="1.4" height="1.4" fill="#8a8a8a"/><rect x="1567.5" y="835.0" width="1.4" height="1.4" fill="#8a8a8a"/><rect x="1570.5" y="832.0" width="1.4" height="1.4" fill="#8a8a8a"/><rect x="1570.5" y="835.0" width="1.4" height="1.4" fill="#8a8a8a"/><rect x="1350" y="848.5" width="229" height="24.5" rx="5" fill="#3d3d3d"/><path d="M1360,857.0L1364,861.0L1360,865.0" fill="none" stroke="#d0d0d0" stroke-width="1.1"/><text x="1372.3" y="865.0" font-size="11.5" fill="#e6e6e6">Viewport Display</text><rect x="1561.5" y="859.0" width="1.4" height="1.4" fill="#8a8a8a"/><rect x="1561.5" y="862.0" width="1.4" height="1.4" fill="#8a8a8a"/><rect x="1564.5" y="859.0" width="1.4" height="1.4" fill="#8a8a8a"/><rect x="1564.5" y="862.0" width="1.4" height="1.4" fill="#8a8a8a"/><rect x="1567.5" y="859.0" width="1.4" height="1.4" fill="#8a8a8a"/><rect x="1567.5" y="862.0" width="1.4" height="1.4" fill="#8a8a8a"/><rect x="1570.5" y="859.0" width="1.4" height="1.4" fill="#8a8a8a"/><rect x="1570.5" y="862.0" width="1.4" height="1.4" fill="#8a8a8a"/><rect x="1350" y="875.5" width="229" height="24.5" rx="5" fill="#3d3d3d"/><path d="M1360,884.0L1364,888.0L1360,892.0" fill="none" stroke="#d0d0d0" stroke-width="1.1"/><text x="1372.3" y="892.0" font-size="11.5" fill="#e6e6e6">Line Art</text><rect x="1561.5" y="886.0" width="1.4" height="1.4" fill="#8a8a8a"/><rect x="1561.5" y="889.0" width="1.4" height="1.4" fill="#8a8a8a"/><rect x="1564.5" y="886.0" width="1.4" height="1.4" fill="#8a8a8a"/><rect x="1564.5" y="889.0" width="1.4" height="1.4" fill="#8a8a8a"/><rect x="1567.5" y="886.0" width="1.4" height="1.4" fill="#8a8a8a"/><rect x="1567.5" y="889.0" width="1.4" height="1.4" fill="#8a8a8a"/><rect x="1570.5" y="886.0" width="1.4" height="1.4" fill="#8a8a8a"/><rect x="1570.5" y="889.0" width="1.4" height="1.4" fill="#8a8a8a"/><rect x="1350" y="902.5" width="229" height="24.5" rx="5" fill="#3d3d3d"/><path d="M1360,911.0L1364,915.0L1360,919.0" fill="none" stroke="#d0d0d0" stroke-width="1.1"/><text x="1372.3" y="919.0" font-size="11.5" fill="#e6e6e6">Custom Properties</text><rect x="1561.5" y="913.0" width="1.4" height="1.4" fill="#8a8a8a"/><rect x="1561.5" y="916.0" width="1.4" height="1.4" fill="#8a8a8a"/><rect x="1564.5" y="913.0" width="1.4" height="1.4" fill="#8a8a8a"/><rect x="1564.5" y="916.0" width="1.4" height="1.4" fill="#8a8a8a"/><rect x="1567.5" y="913.0" width="1.4" height="1.4" fill="#8a8a8a"/><rect x="1567.5" y="916.0" width="1.4" height="1.4" fill="#8a8a8a"/><rect x="1570.5" y="913.0" width="1.4" height="1.4" fill="#8a8a8a"/><rect x="1570.5" y="916.0" width="1.4" height="1.4" fill="#8a8a8a"/><line x1="1316" y1="392" x2="1342" y2="392" stroke="#2a2a2a" stroke-width="1"/><line x1="1316" y1="545" x2="1342" y2="545" stroke="#2a2a2a" stroke-width="1"/><line x1="1316" y1="780" x2="1342" y2="780" stroke="#2a2a2a" stroke-width="1"/><line x1="1316" y1="817" x2="1342" y2="817" stroke="#2a2a2a" stroke-width="1"/><rect x="1316.5" y="585.5" width="26" height="25" rx="4" fill="#303030"/><rect x="1342" y="585.5" width="3" height="25" fill="#303030"/><g fill="#dcdcdc"><rect x="1322" y="370" width="1.3" height="5"/><circle cx="1322.6" cy="380.5" r="2.4"/><path d="M1330.5,370.5C1329,371 1328.5,374 1330.5,375.5V384.5a1,1 0 0 0 2,0V375.5C1334.5,374 1334,371 1332.5,370.5V373.5H1330.5Z"/></g><g fill="#dcdcdc"><path d="M1322,408H1326L1327,406H1331L1332,408H1336V419H1322Z"/></g><g fill="#1d1d1d"><rect x="1323.5" y="410" width="8" height="1.2"/><rect x="1323.5" y="412.3" width="8" height="1.2"/><rect x="1323.5" y="414.6" width="8" height="1.2"/><rect x="1333" y="410" width="1.6" height="1.6"/><rect x="1333" y="414" width="1.6" height="1.6"/></g><g fill="#dcdcdc"><rect x="1322" y="435" width="14" height="4"/><rect x="1324" y="440" width="10" height="8"/></g><path d="M1326,446.5L1328.5,443.5L1331.5,446.5Z" fill="#1d1d1d"/><g fill="none" stroke="#dcdcdc" stroke-width="1"><rect x="1326.5" y="462.5" width="9" height="9"/><path d="M1324.5,464.5V473.5H1333.5M1322.5,466.5V475.5H1331.5"/></g><path d="M1327.5,470.5L1330,467L1331.5,469L1333,466.5L1334.5,470.5Z" fill="#dcdcdc"/><g fill="#dcdcdc"><path d="M1325,501a3.3,3.3 0 0 1 -3.3,-3.3c0,-2 3.3,-7 3.3,-7s3.3,5 3.3,7a3.3,3.3 0 0 1 -3.3,3.3z"/><circle cx="1333" cy="491.5" r="1.7"/></g><circle cx="1331.5" cy="499" r="3.3" fill="#1d1d1d" stroke="#dcdcdc" stroke-width="1"/><circle cx="1328.8" cy="526.3" r="6.5" fill="none" stroke="#c75a63" stroke-width="1.3"/><path d="M1324,522.5C1326,521 1328,523.5 1327,525C1326,527 1328.5,528 1330,527.5C1332,527 1333,530 1331.5,532M1330.5,520.5C1331,522 1333.5,522 1334.5,523" fill="none" stroke="#c75a63" stroke-width="1.8"/><path d="M1322,531L1335.5,521.5" stroke="#1d1d1d" stroke-width="0.8"/><rect x="1322" y="556" width="14" height="3.5" fill="none" stroke="#dcdcdc" stroke-width="1.1"/><rect x="1323" y="560" width="12" height="8" fill="none" stroke="#dcdcdc" stroke-width="1.1"/><rect x="1327" y="562" width="4" height="1.3" fill="#dcdcdc"/><g stroke="#e8934f" stroke-width="1.1" fill="none"><path d="M1321.5,593.5V590.5H1324.5M1333.5,590.5H1336.5V593.5M1336.5,601.5V604.5H1333.5M1324.5,604.5H1321.5V601.5"/></g><rect x="1325" y="593.5" width="8" height="8" fill="#e8934f"/><path d="M1322,632.5L1329,625.5C1328,622.5 1330.5,619.5 1333.8,620L1331.5,622.5L1332.5,624.5L1334.5,625.3L1336.8,623C1337.3,626.5 1334,629 1331,628L1324,635Z" fill="#5a8ad6"/><g fill="#5a8ad6"><circle cx="1324" cy="649" r="2"/><circle cx="1334" cy="649.5" r="1.5"/><circle cx="1333.5" cy="659" r="1.5"/><circle cx="1323.5" cy="659.5" r="1.5"/></g><path d="M1324,649L1333.5,659M1324,649H1334M1324,649V659.5" stroke="#5a8ad6" stroke-width="1.2"/><circle cx="1328" cy="682.5" r="5.5" fill="none" stroke="#5a8ad6" stroke-width="1.3"/><circle cx="1328" cy="682.5" r="2.8" fill="#5a8ad6"/><circle cx="1333.5" cy="677" r="2.2" fill="#5a8ad6" stroke="#1d1d1d" stroke-width="1"/><g fill="none" stroke="#5a8ad6" stroke-width="1.3"><ellipse cx="1328.8" cy="710" rx="6.5" ry="4" transform="rotate(-40 1328.8 710)"/><circle cx="1327" cy="712" r="2"/><circle cx="1331" cy="708" r="1.5"/></g><g fill="none" stroke="#2fc5a0" stroke-width="1.2"><path d="M1323,733H1335L1329,744Z"/></g><g fill="#1d1d1d" stroke="#2fc5a0" stroke-width="1"><rect x="1321.5" y="731.5" width="3" height="3"/><rect x="1333.5" y="731.5" width="3" height="3"/><rect x="1327.5" y="742.5" width="3" height="3"/></g><circle cx="1328.8" cy="766" r="6.5" fill="#c75a63"/><path d="M1328.8,759.5V766H1335.3A6.5,6.5 0 0 1 1328.8,772.5V766H1322.3A6.5,6.5 0 0 1 1328.8,759.5Z" fill="#1d1d1d" fill-opacity="0.6"/><rect x="1322" y="795" width="14" height="14" fill="#c75a63"/><rect x="1322.0" y="795.0" width="3.5" height="3.5" fill="#1d1d1d" fill-opacity="0.7"/><rect x="1322.0" y="802.0" width="3.5" height="3.5" fill="#1d1d1d" fill-opacity="0.7"/><rect x="1325.5" y="798.5" width="3.5" height="3.5" fill="#1d1d1d" fill-opacity="0.7"/><rect x="1325.5" y="805.5" width="3.5" height="3.5" fill="#1d1d1d" fill-opacity="0.7"/><rect x="1329.0" y="795.0" width="3.5" height="3.5" fill="#1d1d1d" fill-opacity="0.7"/><rect x="1329.0" y="802.0" width="3.5" height="3.5" fill="#1d1d1d" fill-opacity="0.7"/><rect x="1332.5" y="798.5" width="3.5" height="3.5" fill="#1d1d1d" fill-opacity="0.7"/><rect x="1332.5" y="805.5" width="3.5" height="3.5" fill="#1d1d1d" fill-opacity="0.7"/></g><defs><clipPath id="tlclip"><rect x="0" y="889" width="1311" height="66" rx="5"/></clipPath></defs><g clip-path="url(#tlclip)"><rect x="0" y="889" width="1311" height="65" fill="#1d1d1d"/><rect x="0" y="889" width="1311" height="25" fill="#303030"/><rect x="8" y="892.5" width="30.5" height="18.5" rx="4" fill="#282828" stroke="#3a3a3a" stroke-width="0.8"/><circle cx="19" cy="901.8" r="6.3" fill="#e6e6e6"/><path d="M20.5,898.3L17.5,901.8L20.5,905.3" fill="none" stroke="#282828" stroke-width="1.6"/><path d="M28.6,900.8L32.0,904.2L35.5,900.8" fill="none" stroke="#d0d0d0" stroke-width="1.25" stroke-linecap="round" stroke-linejoin="round"/><rect x="44.5" y="892.5" width="131" height="18.5" rx="4" fill="#282828" stroke="#3a3a3a" stroke-width="0.8"/><line x1="115.5" y1="893" x2="115.5" y2="910.5" stroke="#3a3a3a"/><text x="52" y="906" font-size="11.5" fill="#e6e6e6">Playback</text><path d="M105.5,900.8L109.0,904.2L112.5,900.8" fill="none" stroke="#d0d0d0" stroke-width="1.25" stroke-linecap="round" stroke-linejoin="round"/><text x="123" y="906" font-size="11.5" fill="#e6e6e6">Keying</text><path d="M165.6,900.8L169.0,904.2L172.4,900.8" fill="none" stroke="#d0d0d0" stroke-width="1.25" stroke-linecap="round" stroke-linejoin="round"/><text x="185.3" y="906" font-size="11.5" fill="#e6e6e6">View</text><text x="225.3" y="906" font-size="11.5" fill="#e6e6e6">Marker</text><rect x="563" y="892.5" width="38" height="18.5" rx="4" fill="#282828" stroke="#3a3a3a" stroke-width="0.8"/><path d="M567,892.5H582V911H567a4,4 0 0 1 -4,-4V896.5a4,4 0 0 1 4,-4Z" fill="#545454"/><circle cx="572.2" cy="901.8" r="4" fill="#e6e6e6"/><path d="M588.9,901.5L591.0,903.5L593.1,901.5" fill="none" stroke="#777777" stroke-width="1.0" stroke-linecap="round" stroke-linejoin="round"/><rect x="607.7" y="892.5" width="118.5" height="18.5" rx="4" fill="#545454"/><line x1="627.5" y1="892.5" x2="627.5" y2="911" stroke="#3d3d3d"/><line x1="647.2" y1="892.5" x2="647.2" y2="911" stroke="#3d3d3d"/><line x1="667.0" y1="892.5" x2="667.0" y2="911" stroke="#3d3d3d"/><line x1="686.7" y1="892.5" x2="686.7" y2="911" stroke="#3d3d3d"/><line x1="706.5" y1="892.5" x2="706.5" y2="911" stroke="#3d3d3d"/><g fill="#e6e6e6"><rect x="611.5" y="896.5" width="1.8" height="10.5"/><path d="M622.5,896.5V907L614.5,901.8Z"/><path d="M628.5,901.8L632,898.3L635.5,901.8L632,905.3Z"/><path d="M643.5,896.5V907L636.5,901.8Z"/><path d="M662,895.8V907.8L653,901.8Z"/><path d="M672.5,895.8V907.8L681.5,901.8Z"/><path d="M689,896.5V907L696,901.8Z"/><path d="M697.5,901.8L701,898.3L704.5,901.8L701,905.3Z"/><path d="M710.5,896.5V907L718.5,901.8Z"/><rect x="719.5" y="896.5" width="1.8" height="10.5"/></g><rect x="1030.7" y="892.8" width="73.6" height="18.5" rx="4" fill="#545454"/><text x="1067.5" y="906" font-size="11.5" fill="#e6e6e6" text-anchor="middle">1</text><rect x="1110.9" y="892.8" width="192.2" height="18.5" rx="4" fill="#545454"/><path d="M1114.9,892.8H1129.5V911.3H1114.9a4,4 0 0 1 -4,-4V896.8a4,4 0 0 1 4,-4Z" fill="#3d3d3d"/><line x1="1218.4" y1="893" x2="1218.4" y2="911" stroke="#3d3d3d"/><circle cx="1120" cy="903" r="4.6" fill="none" stroke="#e0e0e0" stroke-width="1.1"/><path d="M1120,900.3V903.2H1122.3M1118,896.5H1122M1120,896.5V898.3M1124.5,897.5L1126,899" fill="none" stroke="#e0e0e0" stroke-width="1"/><text x="1145.2" y="906" font-size="11.5" fill="#e6e6e6">Start</text><text x="1204" y="906" font-size="11.5" fill="#e6e6e6" text-anchor="end">1</text><text x="1234.3" y="906" font-size="11.5" fill="#e6e6e6">End</text><text x="1290" y="906" font-size="11.5" fill="#e6e6e6" text-anchor="end">250</text><rect x="0" y="914" width="1311" height="41" fill="#1d1d1d"/><rect x="0" y="937" width="1311" height="6.3" fill="#232323"/><rect x="47.5" y="937" width="1215.0" height="6.3" fill="#2e2e2e"/><rect x="0" y="951" width="1311" height="4" fill="#232323"/><rect x="47.5" y="951" width="1215.0" height="4" fill="#282828"/><path d="M18.2,937V955M42.6,937V955M67.0,937V955M91.4,937V955M115.8,937V955M140.2,937V955M164.6,937V955M189.0,937V955M213.4,937V955M237.8,937V955M262.2,937V955M286.6,937V955M311.0,937V955M335.4,937V955M359.8,937V955M384.2,937V955M408.6,937V955M433.0,937V955M457.4,937V955M481.8,937V955M506.2,937V955M530.6,937V955M555.0,937V955M579.4,937V955M603.8,937V955M628.2,937V955M652.6,937V955M677.0,937V955M701.4,937V955M725.8,937V955M750.2,937V955M774.6,937V955M799.0,937V955M823.4,937V955M847.8,937V955M872.2,937V955M896.6,937V955M920.9,937V955M945.3,937V955M969.7,937V955M994.1,937V955M1018.5,937V955M1042.9,937V955M1067.3,937V955M1091.7,937V955M1116.1,937V955M1140.5,937V955M1164.9,937V955M1189.3,937V955M1213.7,937V955M1238.1,937V955M1262.5,937V955M1286.9,937V955" stroke="#1a1a1a" stroke-width="1" stroke-opacity="0.8"/><line x1="47.6" y1="932" x2="47.6" y2="953" stroke="#4772b3" stroke-width="1.8"/><rect x="8.5" y="943.9" width="1294.5" height="8" rx="4" fill="#595959"/><circle cx="12.2" cy="947.9" r="3" fill="#333333" stroke="#6a6a6a" stroke-width="0.8"/><circle cx="1298.6" cy="947.9" r="3" fill="#333333" stroke="#6a6a6a" stroke-width="0.8"/><text x="91.4" y="929.8" font-size="11.5" fill="#d0d0d0" text-anchor="middle">10</text><text x="140.2" y="929.8" font-size="11.5" fill="#d0d0d0" text-anchor="middle">20</text><text x="189.0" y="929.8" font-size="11.5" fill="#d0d0d0" text-anchor="middle">30</text><text x="237.8" y="929.8" font-size="11.5" fill="#d0d0d0" text-anchor="middle">40</text><text x="286.6" y="929.8" font-size="11.5" fill="#d0d0d0" text-anchor="middle">50</text><text x="335.4" y="929.8" font-size="11.5" fill="#d0d0d0" text-anchor="middle">60</text><text x="384.2" y="929.8" font-size="11.5" fill="#d0d0d0" text-anchor="middle">70</text><text x="433.0" y="929.8" font-size="11.5" fill="#d0d0d0" text-anchor="middle">80</text><text x="481.8" y="929.8" font-size="11.5" fill="#d0d0d0" text-anchor="middle">90</text><text x="530.6" y="929.8" font-size="11.5" fill="#d0d0d0" text-anchor="middle">100</text><text x="579.4" y="929.8" font-size="11.5" fill="#d0d0d0" text-anchor="middle">110</text><text x="628.2" y="929.8" font-size="11.5" fill="#d0d0d0" text-anchor="middle">120</text><text x="677.0" y="929.8" font-size="11.5" fill="#d0d0d0" text-anchor="middle">130</text><text x="725.8" y="929.8" font-size="11.5" fill="#d0d0d0" text-anchor="middle">140</text><text x="774.6" y="929.8" font-size="11.5" fill="#d0d0d0" text-anchor="middle">150</text><text x="823.4" y="929.8" font-size="11.5" fill="#d0d0d0" text-anchor="middle">160</text><text x="872.2" y="929.8" font-size="11.5" fill="#d0d0d0" text-anchor="middle">170</text><text x="920.9" y="929.8" font-size="11.5" fill="#d0d0d0" text-anchor="middle">180</text><text x="969.7" y="929.8" font-size="11.5" fill="#d0d0d0" text-anchor="middle">190</text><text x="1018.5" y="929.8" font-size="11.5" fill="#d0d0d0" text-anchor="middle">200</text><text x="1067.3" y="929.8" font-size="11.5" fill="#d0d0d0" text-anchor="middle">210</text><text x="1116.1" y="929.8" font-size="11.5" fill="#d0d0d0" text-anchor="middle">220</text><text x="1164.9" y="929.8" font-size="11.5" fill="#d0d0d0" text-anchor="middle">230</text><text x="1213.7" y="929.8" font-size="11.5" fill="#d0d0d0" text-anchor="middle">240</text><text x="1262.5" y="929.8" font-size="11.5" fill="#d0d0d0" text-anchor="middle">250</text><rect x="35.3" y="917.1" width="24" height="16.5" rx="4" fill="#4772b3"/><text x="47.6" y="929.6" font-size="11.5" fill="#ffffff" text-anchor="middle">1</text><circle cx="0" cy="935" r="7" fill="#191919"/><path d="M0.5,932L3.5,935.2L0.5,938.4" fill="none" stroke="#8a8a8a" stroke-width="1"/><rect x="1305" y="924" width="3" height="30" rx="1.5" fill="#2a2a2a"/><path d="M1309.5,935L1307,937.5L1309.5,940" fill="none" stroke="#8a8a8a" stroke-width="1"/></g><g fill="none" stroke="#e8e8e8" stroke-linecap="round"><circle cx="18.5" cy="13.5" r="4.5" stroke-width="2.1"/><circle cx="18.5" cy="13.5" r="1.5" fill="#e8e8e8" stroke="none"/><path d="M10.1,8.8H19.2M16.9,5.4L21.3,9.3M9.4,15.1L14,11.3" stroke-width="2.1"/></g><text x="34" y="16" font-size="11.5" fill="#dedede">File</text><text x="67" y="16" font-size="11.5" fill="#dedede">Edit</text><text x="103" y="16" font-size="11.5" fill="#dedede">Render</text><text x="154" y="16" font-size="11.5" fill="#dedede">Window</text><text x="211" y="16" font-size="11.5" fill="#dedede">Help</text><path d="M259.4,26V9.5a4,4 0 0 1 4,-4H309.8a4,4 0 0 1 4,4V26Z" fill="#303030"/><text x="269.4" y="19" font-size="11.5" fill="#ffffff">Layout</text><path d="M315.5,24V9.5a4,4 0 0 1 4,-4H377.3a4,4 0 0 1 4,4V24Z" fill="#1c1c1c"/><text x="324.5" y="19" font-size="11.5" fill="#b3b3b3">Modeling</text><path d="M384.3,24V9.5a4,4 0 0 1 4,-4H446.4a4,4 0 0 1 4,4V24Z" fill="#1c1c1c"/><text x="393.3" y="19" font-size="11.5" fill="#b3b3b3">Sculpting</text><path d="M453.2,24V9.5a4,4 0 0 1 4,-4H521.4a4,4 0 0 1 4,4V24Z" fill="#1c1c1c"/><text x="462.2" y="19" font-size="11.5" fill="#b3b3b3">UV Editing</text><path d="M528.5,24V9.5a4,4 0 0 1 4,-4H609.3a4,4 0 0 1 4,4V24Z" fill="#1c1c1c"/><text x="537.5" y="19" font-size="11.5" fill="#b3b3b3">Texture Paint</text><path d="M616.2,24V9.5a4,4 0 0 1 4,-4H672.3a4,4 0 0 1 4,4V24Z" fill="#1c1c1c"/><text x="625.2" y="19" font-size="11.5" fill="#b3b3b3">Shading</text><path d="M679,24V9.5a4,4 0 0 1 4,-4H745a4,4 0 0 1 4,4V24Z" fill="#1c1c1c"/><text x="688" y="19" font-size="11.5" fill="#b3b3b3">Animation</text><path d="M751,24V9.5a4,4 0 0 1 4,-4H816.5a4,4 0 0 1 4,4V24Z" fill="#1c1c1c"/><text x="760" y="19" font-size="11.5" fill="#b3b3b3">Rendering</text><path d="M823.2,24V9.5a4,4 0 0 1 4,-4H904.2a4,4 0 0 1 4,4V24Z" fill="#1c1c1c"/><text x="832.2" y="19" font-size="11.5" fill="#b3b3b3">Compositing</text><path d="M911.1,24V9.5a4,4 0 0 1 4,-4H1012.6a4,4 0 0 1 4,4V24Z" fill="#1c1c1c"/><text x="920.1" y="19" font-size="11.5" fill="#b3b3b3">Geometry Nodes</text><path d="M1019.3,24V9.5a4,4 0 0 1 4,-4H1079.4a4,4 0 0 1 4,4V24Z" fill="#1c1c1c"/><text x="1028.3" y="19" font-size="11.5" fill="#b3b3b3">Scripting</text><rect x="1083" y="5.5" width="24" height="18.5" rx="4" fill="#1d1d1d"/><path d="M1095.5,10V19.5M1090.8,14.8H1100.2" stroke="#b3b3b3" stroke-width="1.2"/><rect x="1190.5" y="2.5" width="191" height="19" rx="4" fill="#1d1d1d" stroke="#2e2e2e" stroke-width="1"/><rect x="1190.5" y="2.5" width="31" height="19" rx="4" fill="#282828"/><rect x="1210" y="2.5" width="11.5" height="19" fill="#282828"/><line x1="1221.5" y1="3" x2="1221.5" y2="21" stroke="#1a1a1a"/><g fill="#e0e0e0"><path d="M1198,18a3.2,3.2 0 0 1 -3,-3.2c0,-2 3,-6.5 3,-6.5s3,4.5 3,6.5a3.2,3.2 0 0 1 -3,3.2z"/><circle cx="1206" cy="8.2" r="1.6"/></g><circle cx="1205" cy="15" r="3" fill="#282828" stroke="#e0e0e0" stroke-width="1"/><path d="M1212.0,10.3L1215.5,13.7L1219.0,10.3" fill="none" stroke="#d0d0d0" stroke-width="1.25" stroke-linecap="round" stroke-linejoin="round"/><text x="1229" y="15.8" font-size="11.5" fill="#e6e6e6">Scene</text><path d="M1323.2,18.6L1327.9,14.1" stroke="#a0a0a0" stroke-width="1.1" stroke-linecap="round"/><path d="M1325.3,10.3L1329.5,9.6L1333.2,5.2L1336.8,8.8L1332.5,13L1331.5,16.7Z" fill="none" stroke="#a0a0a0" stroke-width="1.1" stroke-linejoin="round"/><path d="M1361.5,3H1377.5a4,4 0 0 1 4,4V17.5a4,4 0 0 1 -4,4H1361.5Z" fill="#2c2c2c"/><rect x="1341.5" y="3" width="20" height="18.5" fill="#4a4a4a"/><path d="M1349.5,5.8V14.6H1358.7V9.5" fill="none" stroke="#e6e6e6" stroke-width="1.2"/><path d="M1349.5,5.8H1354.7L1358.7,9.5H1354.7Z" fill="#e6e6e6" stroke="#e6e6e6" stroke-width="0.6"/><path d="M1348.5,8.5H1345.7V18.6H1355.7V15.8" fill="none" stroke="#e6e6e6" stroke-width="1.2"/><path d="M1368,8L1376,16M1376,8L1368,16" stroke="#808080" stroke-width="1"/><rect x="1387.5" y="2.5" width="191" height="19" rx="4" fill="#1d1d1d" stroke="#2e2e2e" stroke-width="1"/><rect x="1387.5" y="2.5" width="31" height="19" rx="4" fill="#282828"/><rect x="1407" y="2.5" width="11.5" height="19" fill="#282828"/><line x1="1418.5" y1="3" x2="1418.5" y2="21" stroke="#1a1a1a"/><g fill="none" stroke="#e0e0e0" stroke-width="1"><rect x="1398.5" y="6.5" width="8" height="8"/><path d="M1396.5,8.5V16.5H1404.5M1394.5,10.5V18.5H1402.5"/></g><path d="M1399.5,13.5L1402,10L1403.5,12L1405,9.5L1406,13.5Z" fill="#e0e0e0"/><path d="M1409.0,10.3L1412.5,13.7L1416.0,10.3" fill="none" stroke="#d0d0d0" stroke-width="1.25" stroke-linecap="round" stroke-linejoin="round"/><text x="1426" y="15.8" font-size="11.5" fill="#e6e6e6">ViewLayer</text><path d="M1558.5,3H1574.5a4,4 0 0 1 4,4V17.5a4,4 0 0 1 -4,4H1558.5Z" fill="#2c2c2c"/><rect x="1538.5" y="3" width="20" height="18.5" fill="#4a4a4a"/><path d="M1546.5,5.8V14.6H1555.7V9.5" fill="none" stroke="#e6e6e6" stroke-width="1.2"/><path d="M1546.5,5.8H1551.7L1555.7,9.5H1551.7Z" fill="#e6e6e6" stroke="#e6e6e6" stroke-width="0.6"/><path d="M1545.5,8.5H1542.7V18.6H1552.7V15.8" fill="none" stroke="#e6e6e6" stroke-width="1.2"/><path d="M1565,8L1573,16M1573,8L1565,16" stroke="#808080" stroke-width="1"/><rect x="11.5" y="958.5" width="9" height="13" rx="3.5" fill="none" stroke="#bdbdbd" stroke-width="1"/><path d="M12.0,964.5V962.0a3,3 0 0 1 3.5,-3H16.0V964.5Z" fill="#9a9a9a"/><rect x="222.5" y="958.5" width="9" height="13" rx="3.5" fill="none" stroke="#bdbdbd" stroke-width="1"/><rect x="226.0" y="961.0" width="2" height="4" fill="#bdbdbd"/><rect x="434.5" y="958.5" width="9" height="13" rx="3.5" fill="none" stroke="#bdbdbd" stroke-width="1"/><path d="M443.0,964.5V962.0a3,3 0 0 0 -3.5,-3H439.0V964.5Z" fill="#9a9a9a"/><text x="1575" y="969" font-size="11.5" fill="#9a9a9a" text-anchor="end">4.0.1</text></svg></body></html>
